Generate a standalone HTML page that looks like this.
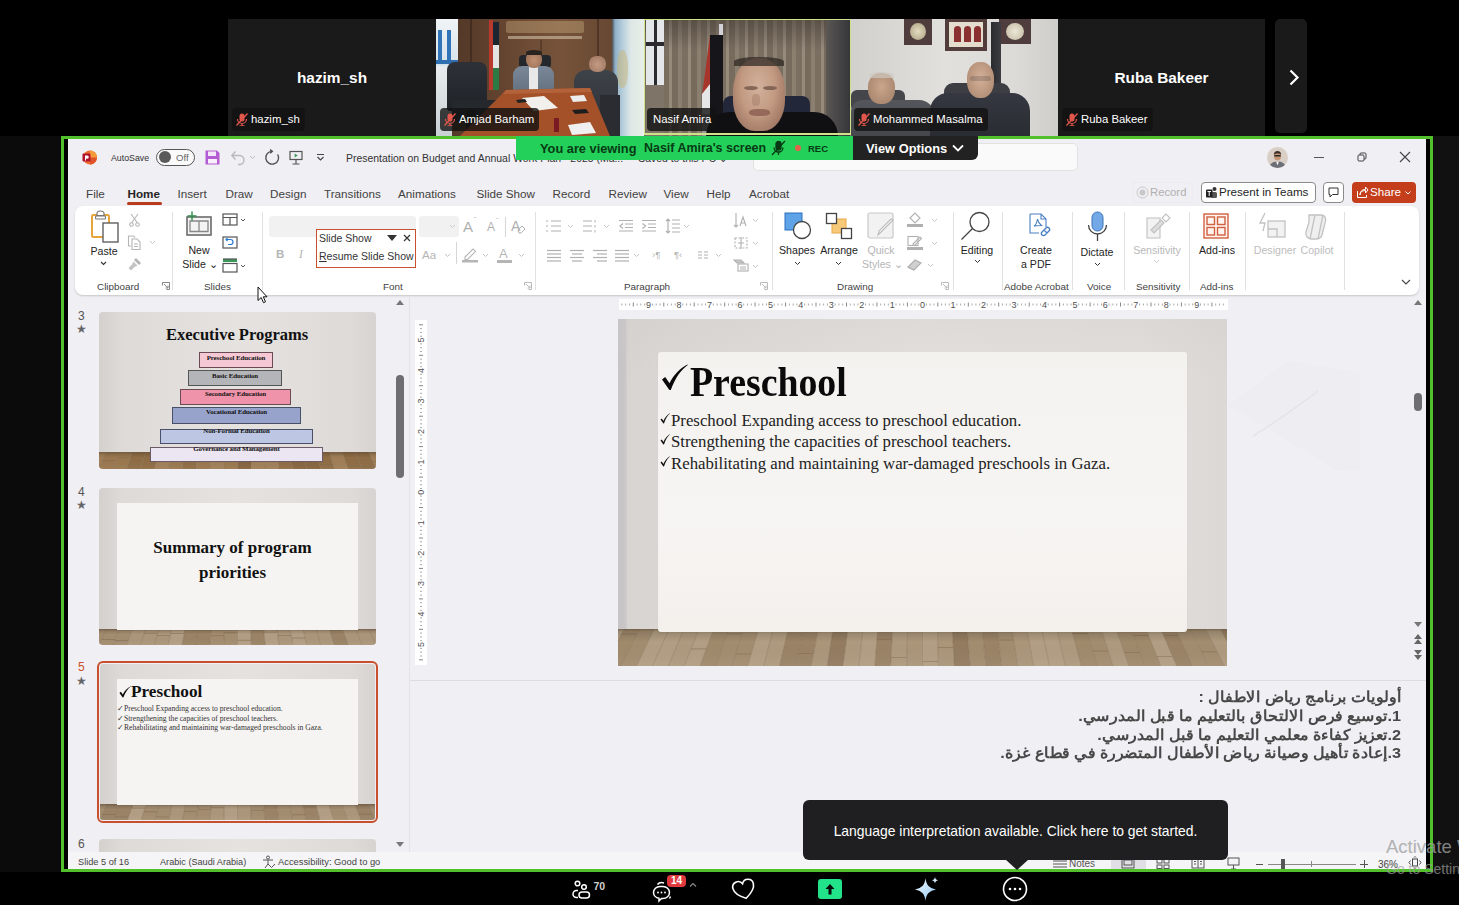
<!DOCTYPE html>
<html><head><meta charset="utf-8">
<style>
*{margin:0;padding:0;box-sizing:border-box}
html,body{width:1459px;height:905px;overflow:hidden;background:#000;font-family:"Liberation Sans",sans-serif}
.a{position:absolute}
.tile{position:absolute;top:19px;height:117px;background:#1a1a1a;overflow:hidden}
.nm{position:absolute;left:0;right:0;top:49.5px;text-align:center;color:#fff;font-weight:bold;font-size:15.4px}
.lab{position:absolute;top:89px;height:23px;background:rgba(17,17,17,.8);border-radius:4px;color:#fff;font-size:11.4px;line-height:23px;padding-left:19px;padding-right:5px;white-space:nowrap}
.mic{position:absolute;left:4px;top:5px;width:12px;height:13px}
#win{position:absolute;left:68px;top:139px;width:1358px;height:730px;background:#f0eff3;overflow:hidden}
.t{position:absolute;white-space:nowrap;color:#242424}

#ppt{position:absolute;left:0;top:0;width:1459px;height:905px;clip-path:inset(139px 33px 36px 68px)}
.tab{position:absolute;top:186.7px;font-size:11.7px;color:#424242;white-space:nowrap;line-height:14px}
.rl{position:absolute;font-size:10.6px;color:#242424;white-space:nowrap;line-height:12px;text-align:center}
.gl{position:absolute;top:280.6px;font-size:9.9px;color:#424242;white-space:nowrap;line-height:12px}
.sep{position:absolute;top:212px;width:1px;height:78px;background:#e1e1e1}
.ic{position:absolute;overflow:visible}
.dl{position:absolute;top:282px;width:8px;height:8px}

.num{position:absolute;left:78px;font-size:12px;color:#555;line-height:12px}
.star{position:absolute;left:76px;font-size:12px;color:#666;line-height:12px}
.th{position:absolute;left:99px;width:277px;height:157px;border-radius:4px;overflow:hidden;background:linear-gradient(90deg,#d3d0ce 0%,#dedad7 8%,#e5e2df 50%,#dedad7 92%,#d6d3d1 100%)}
.fl{position:absolute;left:0;right:0;bottom:0;background:repeating-linear-gradient(115deg,#a88f6f 0 5px,#9b8262 5px 7px,#b09a7c 7px 11px,#947b5c 11px 13px)}
.pn{position:absolute;background:#f6f4f2}
.ser{font-family:"Liberation Serif",serif;position:absolute;white-space:nowrap;color:#111}
</style></head><body>
<svg width="0" height="0" style="position:absolute"><defs><linearGradient id="fshade" x1="0" y1="0" x2="0" y2="1"><stop offset="0" stop-color="#000" stop-opacity=".18"/><stop offset=".35" stop-color="#000" stop-opacity="0"/><stop offset="1" stop-color="#fff" stop-opacity=".05"/></linearGradient></defs></svg>
<!-- video strip -->
<div class="tile" style="left:228px;width:208px"><div class="nm">hazim_sh</div><div class="lab" style="left:4px"><svg class="mic" viewBox="0 0 12 13"><rect x="3.5" y="0.5" width="5" height="8" rx="2.5" fill="#e2574c"/><path d="M1.5 6a4.5 4.5 0 0 0 9 0M6 10.5V13M3.5 12.8h5" fill="none" stroke="#e2574c" stroke-width="1.2"/><path d="M0.5 12.5L11.5 0.5" stroke="#e2574c" stroke-width="1.3"/></svg>hazim_sh</div></div>
<div class="tile" id="v1" style="left:436px;width:208px"><div class="a" style="left:0;top:0;width:208px;height:117px;filter:blur(.45px)"><div class="a" style="left:0px;top:0px;width:208px;height:117px;background:linear-gradient(90deg,#4f3626 0,#5a3d2b 20%,#6e4c35 45%,#76533a 60%,#6a4a34 80%,#5a4232 100%)"></div><div class="a" style="left:34px;top:0px;width:2px;height:81px;background:#422d20"></div><div class="a" style="left:104px;top:21px;width:2px;height:50px;background:#5a3d2b"></div><div class="a" style="left:161px;top:0px;width:2px;height:76px;background:#4e3526"></div><div class="a" style="left:0px;top:0px;width:22px;height:47px;background:linear-gradient(180deg,#f0f4f6,#d6e2ea)"></div><div class="a" style="left:2px;top:11px;width:4px;height:32px;background:#3274b8"></div><div class="a" style="left:11px;top:11px;width:4px;height:32px;background:#3274b8"></div><div class="a" style="left:0px;top:41px;width:22px;height:4px;background:#2f6fb0"></div><div class="a" style="left:0px;top:47px;width:16px;height:70px;background:linear-gradient(180deg,#e8ecee,#c9d0d4)"></div><div class="a" style="left:70px;top:2px;width:78px;height:12px;background:rgba(215,190,140,.35);border-radius:2px"></div><div class="a" style="left:72px;top:17px;width:74px;height:3px;background:rgba(230,215,190,.5)"></div><div class="a" style="left:53px;top:1px;width:4px;height:70px;background:#b83a2f"></div><div class="a" style="left:57px;top:3px;width:6px;height:23px;background:#1d2530"></div><div class="a" style="left:57px;top:26px;width:6px;height:23px;background:#e3e3e3"></div><div class="a" style="left:57px;top:49px;width:6px;height:22px;background:#2d7a45"></div><div class="a" style="left:176px;top:0px;width:32px;height:117px;background:linear-gradient(90deg,#4d4f55 0,#8fb0c8 10%,#b9d0de 35%,#dfe8e6 60%,#e9efe9)"></div><div class="a" style="left:181px;top:31px;width:11px;height:38px;background:#c9b87e;border-radius:45%;opacity:.55"></div><div class="a" style="left:11px;top:43px;width:40px;height:49px;background:linear-gradient(180deg,#2e3137,#1f2227);border-radius:8px 8px 3px 3px"></div><div class="a" style="left:16px;top:81px;width:48px;height:22px;background:#25282d;border-radius:4px"></div><div class="a" style="left:30px;top:91px;width:10px;height:26px;background:#1a1c20"></div><div class="a" style="left:83px;top:36px;width:32px;height:13px;background:#24272c;border-radius:4px"></div><div class="a" style="left:77px;top:47px;width:41px;height:26px;background:linear-gradient(180deg,#7a8899,#64717f);border-radius:9px 9px 3px 3px"></div><div class="a" style="left:93px;top:48px;width:9px;height:23px;background:#e8e8e8"></div><div class="a" style="left:90px;top:32px;width:16px;height:17px;background:radial-gradient(ellipse at 50% 55%,#c09072,#946a52);border-radius:45%"></div><div class="a" style="left:90px;top:31px;width:16px;height:5px;background:#2a2420;border-radius:50% 50% 0 0"></div><div class="a" style="left:138px;top:51px;width:44px;height:58px;background:linear-gradient(180deg,#3e4249,#2e3137);border-radius:12px 12px 4px 4px"></div><div class="a" style="left:153px;top:37px;width:17px;height:16px;background:radial-gradient(ellipse at 50% 55%,#c49a82,#9a7460);border-radius:45%"></div><div class="a" style="left:164px;top:76px;width:20px;height:41px;background:#2a2c31"></div><svg class="ic" style="left:22px;top:69px" width="160" height="48" viewBox="0 0 160 48"><path d="M48 2L132 0 152 48H2z" fill="#a4512a"/><path d="M48 2L132 0 134 4 45 6z" fill="#b3623a"/><path d="M64 10l22-2 14 12-24 3z" fill="#f2f0ec"/><path d="M112 8l14-1 3 6-14 1z" fill="#ececec"/><path d="M110 37l22-3 6 11-24 2z" fill="#f0f0f0"/><path d="M114 22l14-1 3 4-14 1z" fill="#1e1e1e"/><path d="M58 12l9-1 2 3-9 1z" fill="#222"/><path d="M96 30h5v14h-5z" fill="#7a1a22"/></svg></div><div class="lab" style="left:4px"><svg class="mic" viewBox="0 0 12 13"><rect x="3.5" y="0.5" width="5" height="8" rx="2.5" fill="#e2574c"/><path d="M1.5 6a4.5 4.5 0 0 0 9 0M6 10.5V13M3.5 12.8h5" fill="none" stroke="#e2574c" stroke-width="1.2"/><path d="M0.5 12.5L11.5 0.5" stroke="#e2574c" stroke-width="1.3"/></svg>Amjad Barham</div></div>
<div class="tile" id="v2" style="left:644px;width:207px"><div class="a" style="left:0;top:0;width:207px;height:117px;filter:blur(.45px)"><div class="a" style="left:0px;top:0px;width:207px;height:117px;background:repeating-linear-gradient(90deg,#7b6f62 0 6px,#968a7b 6px 9px,#776b5e 9px 15px,#8b7f70 15px 19px)"></div><div class="a" style="left:0px;top:0px;width:207px;height:31px;background:linear-gradient(180deg,rgba(40,34,28,.4),rgba(0,0,0,0))"></div><div class="a" style="left:2px;top:1px;width:18px;height:65px;background:#e4e7ea"></div><div class="a" style="left:2px;top:23px;width:18px;height:4px;background:#2a2a30"></div><div class="a" style="left:10px;top:1px;width:3px;height:65px;background:#2a2a30"></div><div class="a" style="left:2px;top:66px;width:18px;height:51px;background:#7f7468"></div><div class="a" style="left:182px;top:0px;width:24px;height:117px;background:linear-gradient(90deg,#5a5754,#36363a)"></div><svg class="ic" style="left:56px;top:5px" width="26" height="112" viewBox="0 0 26 112"><rect x="19" y="0" width="4" height="11" fill="#d2d2d6"/><path d="M10 11h13v101H10z" fill="#15151a"/><path d="M10 11L2 72v40h8z" fill="#a8352c"/><path d="M2 70l8-10v30H2z" fill="#e6e6e6"/><path d="M2 90h8v22H2z" fill="#9a9a9a"/></svg><div class="a" style="left:79px;top:77px;width:87px;height:22px;background:#22273a;border-radius:8px 8px 0 0"></div><div class="a" style="left:62px;top:93px;width:132px;height:24px;background:#101013;border-radius:28px 28px 0 0"></div><div class="a" style="left:89px;top:39px;width:52px;height:73px;background:radial-gradient(ellipse at 48% 40%,#d2b19c 0,#c29a82 45%,#a07864 78%,#6e5246 100%);border-radius:46% 46% 42% 42%"></div><div class="a" style="left:90px;top:38px;width:50px;height:9px;background:#2a2420;border-radius:50% 50% 0 0;opacity:.7"></div><div class="a" style="left:100px;top:67px;width:14px;height:4px;background:#6d5244;border-radius:50%;opacity:.75"></div><div class="a" style="left:119px;top:67px;width:14px;height:4px;background:#6d5244;border-radius:50%;opacity:.75"></div><div class="a" style="left:108px;top:75px;width:8px;height:12px;background:rgba(150,110,90,.35);border-radius:40%"></div><div class="a" style="left:105px;top:90px;width:21px;height:7px;background:#8a5c50;border-radius:40%;opacity:.8"></div><div class="a" style="left:-1px;top:-1px;width:209px;height:117px;border:2px solid #cfe389"></div></div><div class="lab" style="left:3px;padding-left:6px">Nasif Amira</div></div>
<div class="tile" id="v3" style="left:851px;width:207px"><div class="a" style="left:0;top:0;width:207px;height:117px;filter:blur(.45px)"><div class="a" style="left:0px;top:0px;width:207px;height:117px;background:linear-gradient(90deg,#d2d0cc,#e2e0dc 45%,#dcdad6 80%,#d0cecb)"></div><div class="a" style="left:53px;top:0px;width:28px;height:26px;background:#4f3d3d"></div><div class="a" style="left:59px;top:4px;width:16px;height:17px;background:radial-gradient(circle,#e4dcc0,#a89e80);border-radius:50%"></div><div class="a" style="left:94px;top:0px;width:42px;height:32px;background:#533c3c"></div><div class="a" style="left:98px;top:3px;width:34px;height:25px;background:#e4dccc"></div><div class="a" style="left:103px;top:7px;width:7px;height:16px;background:#8a3030;border-radius:4px 4px 0 0"></div><div class="a" style="left:113px;top:7px;width:7px;height:16px;background:#8a3030;border-radius:4px 4px 0 0"></div><div class="a" style="left:123px;top:7px;width:7px;height:16px;background:#8a3030;border-radius:4px 4px 0 0"></div><div class="a" style="left:148px;top:0px;width:32px;height:25px;background:#4f3d3d"></div><div class="a" style="left:155px;top:4px;width:18px;height:17px;background:radial-gradient(circle,#ece6d6,#bfb8a0);border-radius:50%"></div><div class="a" style="left:140px;top:3px;width:10px;height:68px;background:linear-gradient(90deg,#2a2b2f,#3c3d42)"></div><div class="a" style="left:0px;top:71px;width:54px;height:22px;background:#45464c;border-radius:6px"></div><div class="a" style="left:0px;top:81px;width:84px;height:36px;background:linear-gradient(180deg,#55565c,#46474c);border-radius:12px 16px 0 0"></div><div class="a" style="left:17px;top:54px;width:27px;height:31px;background:radial-gradient(ellipse at 50% 45%,#c9a68c,#a07e66);border-radius:45%"></div><div class="a" style="left:18px;top:53px;width:25px;height:6px;background:#cfc9c2;border-radius:50% 50% 0 0;opacity:.7"></div><div class="a" style="left:93px;top:64px;width:66px;height:29px;background:#3c3e44;border-radius:9px"></div><div class="a" style="left:79px;top:74px;width:100px;height:43px;background:linear-gradient(180deg,#363841,#2a2c33);border-radius:18px 18px 0 0"></div><div class="a" style="left:116px;top:43px;width:27px;height:36px;background:radial-gradient(ellipse at 50% 45%,#d4b098,#a8846c);border-radius:45%"></div><div class="a" style="left:119px;top:57px;width:21px;height:5px;background:rgba(50,50,50,.22);border-radius:3px"></div></div><div class="lab" style="left:3px"><svg class="mic" viewBox="0 0 12 13"><rect x="3.5" y="0.5" width="5" height="8" rx="2.5" fill="#e2574c"/><path d="M1.5 6a4.5 4.5 0 0 0 9 0M6 10.5V13M3.5 12.8h5" fill="none" stroke="#e2574c" stroke-width="1.2"/><path d="M0.5 12.5L11.5 0.5" stroke="#e2574c" stroke-width="1.3"/></svg>Mohammed Masalma</div></div>
<div class="tile" style="left:1058px;width:207px"><div class="nm">Ruba Bakeer</div><div class="lab" style="left:4px"><svg class="mic" viewBox="0 0 12 13"><rect x="3.5" y="0.5" width="5" height="8" rx="2.5" fill="#e2574c"/><path d="M1.5 6a4.5 4.5 0 0 0 9 0M6 10.5V13M3.5 12.8h5" fill="none" stroke="#e2574c" stroke-width="1.2"/><path d="M0.5 12.5L11.5 0.5" stroke="#e2574c" stroke-width="1.3"/></svg>Ruba Bakeer</div></div>
<div class="a" style="left:1275px;top:19px;width:32px;height:114px;background:#1a1a1a;border-radius:5px"></div><svg class="ic" style="left:1289px;top:69px" width="11" height="17" viewBox="0 0 11 17" fill="none" stroke="#fff" stroke-width="2.2"><path d="M1.5 1.5l7 7-7 7"/></svg>

<!-- share border -->
<div class="a" style="left:0;top:136px;width:61px;height:736px;background:#0b0b0b"></div><div class="a" style="left:1433px;top:136px;width:26px;height:736px;background:#111"></div>
<div class="a" style="left:61px;top:136px;width:1372px;height:736px;border:3px solid #52c02a;background:#000"></div>
<div id="win"></div>

<div id="ppt">
<!-- title bar -->
<svg class="ic" style="left:82px;top:150px" width="15" height="15" viewBox="0 0 15 15"><circle cx="8" cy="7.5" r="7" fill="#ed6c2f"/><path d="M8 .5a7 7 0 0 1 0 14z" fill="#f59b3c"/><path d="M8 7.5h7a7 7 0 0 1-7 7z" fill="#e0522a"/><rect x="0.5" y="3.5" width="8" height="8" rx="1" fill="#b3122b"/><path d="M3 5.5h2.2a1.6 1.6 0 0 1 0 3.2H4v1.8H3z" fill="#fff"/></svg>
<div class="t" style="left:111px;top:153px;font-size:8.8px;color:#333">AutoSave</div>
<div class="a" style="left:156px;top:149px;width:39px;height:17px;border:1px solid #555;border-radius:9px;background:#fafafa"></div>
<div class="a" style="left:159px;top:151px;width:12px;height:12px;border-radius:50%;background:#5a5a5a"></div>
<div class="t" style="left:176px;top:152px;font-size:9.6px;color:#666">Off</div>
<svg class="ic" style="left:205px;top:150px" width="15" height="15" viewBox="0 0 15 15"><path d="M0.5 0.5h11.5l2.5 2.5v11.5h-14z" fill="#b45cd4"/><rect x="3" y="1.5" width="8" height="4.5" fill="#fff" opacity=".85"/><rect x="3" y="9" width="9" height="4.5" fill="#fff" opacity=".9"/></svg>
<svg class="ic" style="left:230px;top:149px" width="16" height="16" viewBox="0 0 16 16" fill="none" stroke="#b9b9b9" stroke-width="1.4"><path d="M2 6.5h7.5a4.5 4.5 0 0 1 0 9H8"/><path d="M5.5 2.5L1.8 6.5l3.7 4"/></svg>
<svg class="ic" style="left:249px;top:155px" width="7" height="5" viewBox="0 0 7 5" fill="none" stroke="#bbb" stroke-width="1"><path d="M1 1l2.5 2.5L6 1"/></svg>
<svg class="ic" style="left:264px;top:149px" width="17" height="17" viewBox="0 0 17 17" fill="none" stroke="#505050" stroke-width="1.3"><path d="M8 2.3A6.4 6.4 0 1 0 13.6 5.3"/><path d="M6 .6l2.4 1.7L6.2 4.3"/></svg>
<svg class="ic" style="left:289px;top:150px" width="14" height="15" viewBox="0 0 14 15" fill="none" stroke="#555" stroke-width="1.2"><rect x="1" y="1.5" width="12" height="8"/><path d="M7 9.5v4.5M3.5 14h7"/><path d="M5.6 3.6l3.2 1.9-3.2 1.9z" fill="#3a9a5a" stroke="none"/></svg>
<svg class="ic" style="left:316px;top:153px" width="9" height="9" viewBox="0 0 9 9" fill="none" stroke="#444" stroke-width="1.1"><path d="M1 1.5h7M1.5 4l3 3 3-3"/></svg>
<div class="t" style="left:346px;top:152px;font-size:10.45px;color:#333">Presentation on Budget and Annual Work Plan - 2025 (Ma... &nbsp;- &nbsp;Saved to this PC &#8964;</div>
<div class="a" style="left:753px;top:143px;width:325px;height:28px;background:#fafafa;border:1px solid #e2e2e2;border-radius:5px"></div>
<svg class="ic" style="left:1267px;top:147px" width="21" height="21" viewBox="0 0 21 21"><defs><clipPath id="avc"><circle cx="10.5" cy="10.5" r="10.5"/></clipPath></defs><g clip-path="url(#avc)"><rect width="21" height="21" fill="#d9cfc6"/><path d="M2 21c1-5 4-6.5 8.5-6.5S18 16 19 21z" fill="#6d6f78"/><path d="M9 14.5h3l-1.5 4z" fill="#eee"/><ellipse cx="10.5" cy="9" rx="3.6" ry="4.4" fill="#c49474"/><path d="M6.8 8.2c0-3 1.6-4.3 3.7-4.3s3.7 1.3 3.7 4.3c-.8-1.2-2-1.6-3.7-1.6s-2.9.4-3.7 1.6z" fill="#3a302a"/><rect x="7.3" y="8" width="6.4" height="1.6" rx=".6" fill="#2a2a2a"/></g></svg>
<div class="a" style="left:1314px;top:157px;width:10px;height:1px;background:#555"></div>
<svg class="ic" style="left:1357px;top:152px" width="10" height="10" viewBox="0 0 10 10" fill="none" stroke="#444" stroke-width="1"><rect x="1" y="3" width="6" height="6" rx="1"/><path d="M3 3V2a1 1 0 0 1 1-1h4a1 1 0 0 1 1 1v4a1 1 0 0 1-1 1H7"/></svg>
<svg class="ic" style="left:1399px;top:151px" width="12" height="12" viewBox="0 0 12 12" fill="none" stroke="#444" stroke-width="1.1"><path d="M1 1l10 10M11 1L1 11"/></svg>
<!-- tabs -->
<div class="tab" style="left:86px">File</div>
<div class="tab" style="left:127.5px;font-weight:bold;color:#242424">Home</div>
<div class="a" style="left:127px;top:202px;width:35px;height:2.5px;border-radius:2px;background:#b83b1d"></div>
<div class="tab" style="left:177.5px">Insert</div>
<div class="tab" style="left:225.5px">Draw</div>
<div class="tab" style="left:270px">Design</div>
<div class="tab" style="left:324px">Transitions</div>
<div class="tab" style="left:398px">Animations</div>
<div class="tab" style="left:476.5px">Slide Show</div>
<div class="tab" style="left:552.5px">Record</div>
<div class="tab" style="left:608.5px">Review</div>
<div class="tab" style="left:663.5px">View</div>
<div class="tab" style="left:706.5px">Help</div>
<div class="tab" style="left:749px">Acrobat</div>
<!-- right buttons -->
<div class="a" style="left:1132px;top:182px;width:61px;height:21px;border:1px solid #ececec;border-radius:4px"></div>
<svg class="ic" style="left:1136px;top:186px" width="13" height="13" viewBox="0 0 13 13"><circle cx="6.5" cy="6.5" r="5.5" fill="none" stroke="#c8c8c8" stroke-width="1"/><circle cx="6.5" cy="6.5" r="3" fill="#c8c8c8"/></svg>
<div class="t" style="left:1150px;top:186px;font-size:11.3px;color:#b0b0b0">Record</div>
<div class="a" style="left:1201px;top:182px;width:115px;height:21px;border:1px solid #8a8a8a;border-radius:4px;background:#fff"></div>
<svg class="ic" style="left:1205px;top:186px" width="13" height="13" viewBox="0 0 13 13"><circle cx="9.5" cy="3" r="2" fill="#333"/><rect x="6" y="6" width="6" height="6" rx="1.5" fill="#555"/><rect x="1" y="3.5" width="6.5" height="8" rx="1" fill="#222"/><path d="M2.5 5.5h3.5M4.2 5.5v4.5" stroke="#fff" stroke-width="1"/></svg>
<div class="t" style="left:1219px;top:185px;font-size:11.6px;color:#242424">Present in Teams</div>
<div class="a" style="left:1323px;top:182px;width:21px;height:21px;border:1px solid #8a8a8a;border-radius:4px;background:#fff"></div>
<svg class="ic" style="left:1328px;top:187px" width="11" height="11" viewBox="0 0 11 11" fill="none" stroke="#333" stroke-width="1"><path d="M1 1h9v6.5H4.5L2 10V7.5H1z"/></svg>
<div class="a" style="left:1352px;top:182px;width:64px;height:21px;border-radius:4px;background:#c43e1c"></div>
<svg class="ic" style="left:1356px;top:186px" width="13" height="13" viewBox="0 0 13 13" fill="none" stroke="#fff" stroke-width="1"><path d="M1.5 5v6.5h9V9"/><path d="M4 9c0-3 2-4.5 5.5-4.5V7L12 4 9.5 1v2.5C5.5 3.5 4 6 4 9z"/></svg>
<div class="t" style="left:1370px;top:185px;font-size:11.6px;color:#fff">Share</div>
<svg class="ic" style="left:1405px;top:191px" width="6" height="4" viewBox="0 0 6 4" fill="none" stroke="#fff" stroke-width="1"><path d="M.5.5L3 3 5.5.5"/></svg>
<!-- ribbon -->
<div class="a" style="left:75px;top:206px;width:1344px;height:89px;background:#fff;border-radius:8px;box-shadow:0 1px 2px rgba(0,0,0,.18)"></div>

<!-- Clipboard -->
<svg class="ic" style="left:90px;top:211px" width="30" height="33" viewBox="0 0 30 33"><rect x="2" y="4" width="17" height="22" rx="1.5" fill="#fff" stroke="#e8a33a" stroke-width="2"/><path d="M7 4.5h7v-2a3.5 2.5 0 0 0-7 0z" fill="#fff" stroke="#777" stroke-width="1.2"/><rect x="5.5" y="5" width="10" height="3" rx="1" fill="#fff" stroke="#777" stroke-width="1.1"/><rect x="13" y="12" width="15" height="19" fill="#fff" stroke="#616161" stroke-width="1.4"/></svg>
<div class="rl" style="left:90px;top:245px;width:28px">Paste</div>
<svg class="ic" style="left:100px;top:261px" width="7" height="5" viewBox="0 0 7 5" fill="none" stroke="#333" stroke-width="1.1"><path d="M1 1l2.5 2.5L6 1"/></svg>
<svg class="ic" style="left:129px;top:213px" width="11" height="14" viewBox="0 0 11 14" fill="none" stroke="#b5b5b5" stroke-width="1.1"><path d="M2 1l6.5 9M9 1L2.5 10"/><circle cx="2.5" cy="11.5" r="1.8"/><circle cx="8.5" cy="11.5" r="1.8"/></svg>
<svg class="ic" style="left:127px;top:235px" width="16" height="15" viewBox="0 0 16 15" fill="none" stroke="#b5b5b5" stroke-width="1.1"><path d="M4 11H1.5V1h5l1.5 1.5"/><path d="M5 4h5l3 3v7.5H5z"/><path d="M7 9h4M7 11.5h4"/></svg>
<svg class="ic" style="left:149px;top:240px" width="7" height="5" viewBox="0 0 7 5" fill="none" stroke="#c5c5c5" stroke-width="1"><path d="M1 1l2.5 2.5L6 1"/></svg>
<svg class="ic" style="left:127px;top:257px" width="15" height="15" viewBox="0 0 15 15" fill="#b5b5b5"><path d="M9 1l5 5-2 2-5-5z"/><path d="M6.5 4.5l4 4-3 1.5L4 13.5 1.5 11 5 7.5z" fill="#c3c3c3"/></svg>
<div class="gl" style="left:97px">Clipboard</div>
<svg class="dl" style="left:162px" viewBox="0 0 8 8" fill="none" stroke="#888" stroke-width="1"><path d="M.5 3.5V.5h7v7h-3M2 2l4 4M6 3.5V6H3.5"/></svg>
<div class="sep" style="left:172px"></div>
<!-- Slides -->
<svg class="ic" style="left:185px;top:211px" width="28" height="25" viewBox="0 0 28 25" fill="none"><rect x="2" y="6" width="24" height="18" fill="#f4f4f4" stroke="#6b6b6b" stroke-width="1.6"/><path d="M5 10h18v10.5H5z" stroke="#888" stroke-width="1.3"/><path d="M14 10v10.5" stroke="#888" stroke-width="1.3"/><path d="M7 0.5v9M2.5 5h9" stroke="#2f8a4a" stroke-width="1.4"/></svg>
<div class="rl" style="left:186px;top:244px;width:26px">New</div>
<div class="rl" style="left:181px;top:258px;width:38px">Slide &#8964;</div>
<svg class="ic" style="left:222px;top:213px" width="24" height="14" viewBox="0 0 24 14" fill="none" stroke="#555" stroke-width="1.2"><rect x="1" y="1" width="14" height="11"/><path d="M1 4.5h14M8 4.5V12"/><path d="M19 6l2 2 2-2" stroke-width="1"/></svg>
<svg class="ic" style="left:222px;top:235px" width="16" height="14" viewBox="0 0 16 14" fill="none" stroke="#555" stroke-width="1.2"><rect x="1" y="2" width="14" height="11"/><path d="M4 4.5h4.5a2.5 2.5 0 0 1 0 5H6" stroke="#2b7cd3"/><path d="M5.5 3L4 4.5 5.5 6" stroke="#2b7cd3"/></svg>
<svg class="ic" style="left:222px;top:258px" width="24" height="15" viewBox="0 0 24 15" fill="none" stroke="#555" stroke-width="1.2"><rect x="1" y="1" width="14" height="3" fill="#3a9a5a" stroke="none"/><rect x="1" y="5.5" width="14" height="8.5"/><path d="M1 1h14" stroke="#555"/><path d="M19 7l2 2 2-2" stroke-width="1"/></svg>
<div class="gl" style="left:204px">Slides</div>
<div class="sep" style="left:262px"></div>
<!-- Font -->
<div class="a" style="left:269px;top:216px;width:147px;height:21px;background:#f1f1f1;border-radius:3px"></div>
<div class="a" style="left:419px;top:216px;width:40px;height:21px;background:#f1f1f1;border-radius:3px"></div>
<svg class="ic" style="left:449px;top:224px" width="7" height="5" viewBox="0 0 7 5" fill="none" stroke="#ccc" stroke-width="1"><path d="M1 1l2.5 2.5L6 1"/></svg>
<div class="t" style="left:463px;top:218px;font-size:15px;color:#b0b0b0">A</div>
<div class="t" style="left:474px;top:216px;font-size:7px;color:#b0b0b0">&#710;</div>
<div class="t" style="left:487px;top:220px;font-size:12px;color:#b0b0b0">A</div>
<div class="t" style="left:496px;top:217px;font-size:7px;color:#b0b0b0">&#711;</div>
<div class="a" style="left:505px;top:217px;width:1px;height:20px;background:#d6d6d6"></div>
<div class="t" style="left:511px;top:218px;font-size:14px;color:#b0b0b0">A</div>
<svg class="ic" style="left:517px;top:225px" width="9" height="9" viewBox="0 0 9 9" fill="none" stroke="#b0b0b0" stroke-width="1"><path d="M1 5l4-4 3 3-4 4H2z"/></svg>
<div class="t" style="left:276px;top:248px;font-size:11.5px;font-weight:bold;color:#b5b5b5">B</div>
<div class="t" style="left:299px;top:248px;font-size:11.5px;font-style:italic;color:#b5b5b5;font-family:'Liberation Serif',serif">I</div>
<div class="t" style="left:422px;top:249px;font-size:11.5px;color:#b5b5b5">Aa</div>
<svg class="ic" style="left:444px;top:253px" width="7" height="5" viewBox="0 0 7 5" fill="none" stroke="#c5c5c5" stroke-width="1"><path d="M1 1l2.5 2.5L6 1"/></svg>
<div class="a" style="left:456px;top:242px;width:1px;height:22px;background:#d6d6d6"></div>
<svg class="ic" style="left:461px;top:246px" width="18" height="17" viewBox="0 0 18 17" fill="none" stroke="#b5b5b5" stroke-width="1.1"><path d="M4 11l8-8 2.5 2.5-8 8H4z"/><rect x="1" y="14" width="16" height="2.5" fill="#b5b5b5" stroke="none"/></svg>
<svg class="ic" style="left:482px;top:253px" width="7" height="5" viewBox="0 0 7 5" fill="none" stroke="#c5c5c5" stroke-width="1"><path d="M1 1l2.5 2.5L6 1"/></svg>
<div class="t" style="left:499px;top:246px;font-size:13px;color:#b5b5b5">A</div>
<div class="a" style="left:497px;top:260px;width:15px;height:2.5px;background:#b5b5b5"></div>
<svg class="ic" style="left:518px;top:253px" width="7" height="5" viewBox="0 0 7 5" fill="none" stroke="#c5c5c5" stroke-width="1"><path d="M1 1l2.5 2.5L6 1"/></svg>
<div class="a" style="left:316px;top:229px;width:100px;height:39px;border:1.5px solid #c9502e;background:#fff"></div>
<div class="t" style="left:319px;top:232px;font-size:10.5px;color:#333">Slide Show</div>
<svg class="ic" style="left:387px;top:235px" width="10" height="6" viewBox="0 0 10 6"><path d="M0 0h10L5 6z" fill="#333"/></svg>
<svg class="ic" style="left:403px;top:234px" width="8" height="8" viewBox="0 0 8 8" fill="none" stroke="#333" stroke-width="1.2"><path d="M1 1l6 6M7 1L1 7"/></svg>
<div class="t" style="left:319px;top:250px;font-size:10.5px;color:#333"><u>R</u>esume Slide Show</div>
<div class="gl" style="left:383px">Font</div>
<svg class="dl" style="left:524px" viewBox="0 0 8 8" fill="none" stroke="#bbb" stroke-width="1"><path d="M.5 3.5V.5h7v7h-3M2 2l4 4M6 3.5V6H3.5"/></svg>
<div class="sep" style="left:535px"></div>

<!-- Paragraph -->
<svg class="ic" style="left:545px;top:219px" width="17" height="14" viewBox="0 0 17 14" fill="none" stroke="#b0b0b0" stroke-width="1.2"><path d="M1 2h2M1 7h2M1 12h2M6 2h10M6 7h10M6 12h10"/></svg><svg class="ic" style="left:567px;top:224px" width="7" height="5" viewBox="0 0 7 5" fill="none" stroke="#c5c5c5" stroke-width="1"><path d="M1 1l2.5 2.5L6 1"/></svg>
<svg class="ic" style="left:582px;top:219px" width="17" height="14" viewBox="0 0 17 14" fill="none" stroke="#b0b0b0" stroke-width="1.2"><path d="M1 2h9M1 7h9M1 12h9"/><path d="M13 1v2.5M13 6v2.5M13 11v2.5" stroke-width="1"/></svg><svg class="ic" style="left:603px;top:224px" width="7" height="5" viewBox="0 0 7 5" fill="none" stroke="#c5c5c5" stroke-width="1"><path d="M1 1l2.5 2.5L6 1"/></svg>
<svg class="ic" style="left:618px;top:219px" width="16" height="14" viewBox="0 0 16 14" fill="none" stroke="#b0b0b0" stroke-width="1.2"><path d="M1 1.5h14M7 5h8M7 8.5h8M1 12h14M5 4.5L2 7l3 2.5"/></svg>
<svg class="ic" style="left:641px;top:219px" width="16" height="14" viewBox="0 0 16 14" fill="none" stroke="#b0b0b0" stroke-width="1.2"><path d="M1 1.5h14M7 5h8M7 8.5h8M1 12h14M1.5 4.5l3 2.5-3 2.5"/></svg>
<svg class="ic" style="left:665px;top:218px" width="16" height="16" viewBox="0 0 16 16" fill="none" stroke="#b0b0b0" stroke-width="1.2"><path d="M3 1v14M1 3l2-2 2 2M1 13l2 2 2-2M7 2h8M7 6h8M7 10h8M7 14h8"/></svg><svg class="ic" style="left:683px;top:224px" width="7" height="5" viewBox="0 0 7 5" fill="none" stroke="#c5c5c5" stroke-width="1"><path d="M1 1l2.5 2.5L6 1"/></svg>
<svg class="ic" style="left:733px;top:212px" width="15" height="17" viewBox="0 0 15 17" fill="none" stroke="#b0b0b0" stroke-width="1.1"><path d="M3 1v14M1 13l2 2 2-2M7 14l3-9 3 9M8 11h4" /></svg><svg class="ic" style="left:752px;top:218px" width="7" height="5" viewBox="0 0 7 5" fill="none" stroke="#c5c5c5" stroke-width="1"><path d="M1 1l2.5 2.5L6 1"/></svg>
<svg class="ic" style="left:733px;top:236px" width="16" height="14" viewBox="0 0 16 14" fill="none" stroke="#b0b0b0" stroke-width="1.1"><rect x="2" y="2" width="12" height="10" stroke-dasharray="2 1.5"/><path d="M8 1v12M5 7h6"/></svg><svg class="ic" style="left:752px;top:241px" width="7" height="5" viewBox="0 0 7 5" fill="none" stroke="#c5c5c5" stroke-width="1"><path d="M1 1l2.5 2.5L6 1"/></svg>
<svg class="ic" style="left:733px;top:258px" width="16" height="14" viewBox="0 0 16 14" fill="none" stroke="#b0b0b0" stroke-width="1.1"><path d="M1 2h7l3 3H4z" fill="#c8c8c8"/><rect x="5" y="6" width="10" height="7"/><path d="M7 9h6M7 11h6"/></svg><svg class="ic" style="left:752px;top:264px" width="7" height="5" viewBox="0 0 7 5" fill="none" stroke="#c5c5c5" stroke-width="1"><path d="M1 1l2.5 2.5L6 1"/></svg>
<svg class="ic" style="left:546px;top:249px" width="16" height="14" viewBox="0 0 16 14" fill="none" stroke="#b0b0b0" stroke-width="1.2"><path d="M1 1.5H15"/><path d="M1 5.0H15"/><path d="M1 8.5H15"/><path d="M1 12.0H15"/></svg>
<svg class="ic" style="left:569px;top:249px" width="16" height="14" viewBox="0 0 16 14" fill="none" stroke="#b0b0b0" stroke-width="1.2"><path d="M1 1.5H15"/><path d="M3 5.0H13"/><path d="M1 8.5H15"/><path d="M3 12.0H13"/></svg>
<svg class="ic" style="left:592px;top:249px" width="16" height="14" viewBox="0 0 16 14" fill="none" stroke="#b0b0b0" stroke-width="1.2"><path d="M1 1.5H15"/><path d="M5 5.0H15"/><path d="M1 8.5H15"/><path d="M5 12.0H15"/></svg>
<svg class="ic" style="left:614px;top:249px" width="16" height="14" viewBox="0 0 16 14" fill="none" stroke="#b0b0b0" stroke-width="1.2"><path d="M1 1.5H15"/><path d="M1 5.0H15"/><path d="M1 8.5H15"/><path d="M1 12.0H15"/></svg><svg class="ic" style="left:633px;top:253px" width="7" height="5" viewBox="0 0 7 5" fill="none" stroke="#c5c5c5" stroke-width="1"><path d="M1 1l2.5 2.5L6 1"/></svg>
<div class="t" style="left:652px;top:249px;font-size:9.5px;color:#b0b0b0">&#8250;&#182;</div>
<div class="t" style="left:674px;top:249px;font-size:9.5px;color:#b0b0b0">&#182;&#8249;</div>
<svg class="ic" style="left:697px;top:250px" width="12" height="10" viewBox="0 0 12 10" fill="none" stroke="#b0b0b0" stroke-width="1.1"><path d="M1 2h4M1 5h4M1 8h4M7 2h4M7 5h4M7 8h4"/></svg><svg class="ic" style="left:715px;top:253px" width="7" height="5" viewBox="0 0 7 5" fill="none" stroke="#c5c5c5" stroke-width="1"><path d="M1 1l2.5 2.5L6 1"/></svg>
<div class="gl" style="left:624px">Paragraph</div>
<svg class="dl" style="left:760px" viewBox="0 0 8 8" fill="none" stroke="#bbb" stroke-width="1"><path d="M.5 3.5V.5h7v7h-3M2 2l4 4M6 3.5V6H3.5"/></svg>
<div class="sep" style="left:772px"></div>
<!-- Drawing -->
<svg class="ic" style="left:784px;top:212px" width="28" height="28" viewBox="0 0 28 28"><rect x="1" y="1" width="17" height="17" fill="#5ea3e8" stroke="#2b6fc0" stroke-width="1"/><circle cx="18" cy="18" r="8.5" fill="#fff" stroke="#444" stroke-width="1.3"/></svg>
<div class="rl" style="left:777px;top:244px;width:40px">Shapes</div><svg class="ic" style="left:794px;top:261px" width="7" height="5" viewBox="0 0 7 5" fill="none" stroke="#333" stroke-width="1"><path d="M1 1l2.5 2.5L6 1"/></svg>
<svg class="ic" style="left:825px;top:212px" width="28" height="28" viewBox="0 0 28 28"><rect x="7" y="7" width="14" height="14" fill="#f8c978" stroke="#e8a84a" stroke-width="1"/><rect x="1.5" y="1.5" width="10" height="10" fill="#fff" stroke="#444" stroke-width="1.3"/><rect x="16.5" y="16.5" width="10" height="10" fill="#fff" stroke="#444" stroke-width="1.3"/></svg>
<div class="rl" style="left:818px;top:244px;width:42px">Arrange</div><svg class="ic" style="left:835px;top:261px" width="7" height="5" viewBox="0 0 7 5" fill="none" stroke="#333" stroke-width="1"><path d="M1 1l2.5 2.5L6 1"/></svg>
<svg class="ic" style="left:867px;top:212px" width="28" height="28" viewBox="0 0 28 28" fill="none"><rect x="1" y="1" width="25" height="25" rx="2" fill="#f2f2f2" stroke="#c8c8c8" stroke-width="1.2"/><path d="M26 8L14 20l-3 3 1-4L24 7z" fill="#fff" stroke="#bbb" stroke-width="1.1"/></svg>
<div class="rl" style="left:866px;top:244px;width:30px;color:#b5b5b5">Quick</div>
<div class="rl" style="left:862px;top:258px;width:40px;color:#b5b5b5">Styles &#8964;</div>
<svg class="ic" style="left:906px;top:212px" width="18" height="16" viewBox="0 0 18 16" fill="none" stroke="#b0b0b0" stroke-width="1.1"><path d="M4 6l5-5 5 5-5 5z"/><rect x="1" y="12" width="16" height="3" fill="#b0b0b0" stroke="none"/></svg><svg class="ic" style="left:931px;top:218px" width="7" height="5" viewBox="0 0 7 5" fill="none" stroke="#c5c5c5" stroke-width="1"><path d="M1 1l2.5 2.5L6 1"/></svg>
<svg class="ic" style="left:906px;top:235px" width="18" height="16" viewBox="0 0 18 16" fill="none" stroke="#b0b0b0" stroke-width="1.1"><rect x="2" y="1.5" width="10" height="9"/><path d="M7 9l7-7 1.5 1.5-7 7H7z"/><rect x="1" y="12" width="16" height="3" fill="#b0b0b0" stroke="none"/></svg><svg class="ic" style="left:931px;top:241px" width="7" height="5" viewBox="0 0 7 5" fill="none" stroke="#c5c5c5" stroke-width="1"><path d="M1 1l2.5 2.5L6 1"/></svg>
<svg class="ic" style="left:906px;top:258px" width="17" height="14" viewBox="0 0 17 14" fill="none" stroke="#b0b0b0" stroke-width="1.1"><path d="M2 9l7-7 6 3-7 7z" fill="#d0d0d0"/><path d="M2 9l6 3"/></svg><svg class="ic" style="left:927px;top:263px" width="7" height="5" viewBox="0 0 7 5" fill="none" stroke="#c5c5c5" stroke-width="1"><path d="M1 1l2.5 2.5L6 1"/></svg>
<div class="gl" style="left:837px">Drawing</div>
<svg class="dl" style="left:941px" viewBox="0 0 8 8" fill="none" stroke="#bbb" stroke-width="1"><path d="M.5 3.5V.5h7v7h-3M2 2l4 4M6 3.5V6H3.5"/></svg>
<div class="sep" style="left:953px"></div>
<!-- Editing -->
<svg class="ic" style="left:960px;top:211px" width="31" height="30" viewBox="0 0 31 30" fill="none" stroke="#444" stroke-width="1.3"><circle cx="19.5" cy="11" r="9.5"/><path d="M12.5 17.5L1.5 28.5"/></svg>
<div class="rl" style="left:957px;top:244px;width:40px">Editing</div><svg class="ic" style="left:974px;top:259px" width="7" height="5" viewBox="0 0 7 5" fill="none" stroke="#333" stroke-width="1"><path d="M1 1l2.5 2.5L6 1"/></svg>
<div class="sep" style="left:1002px"></div>
<!-- Acrobat -->
<svg class="ic" style="left:1028px;top:213px" width="25" height="26" viewBox="0 0 25 26" fill="none" stroke="#4a7fc4" stroke-width="1.1"><path d="M2 1h11l5 5v8"/><path d="M2 1v19h9"/><path d="M13 1v5h5"/><path d="M6 13c2-1 3-4 3.5-7 .5 3 2 5 4 6.5-2.5 0-6 .5-7.5.5z"/><path d="M14 19l4-4a2 2 0 0 1 3 3l-4 4a2 2 0 0 1-3-3zM16 17l3 3" stroke-width="1.3"/></svg>
<div class="rl" style="left:1016px;top:244px;width:40px">Create</div>
<div class="rl" style="left:1016px;top:258px;width:40px">a PDF</div>
<div class="gl" style="left:1004px">Adobe Acrobat</div>
<div class="sep" style="left:1072px"></div>
<!-- Voice -->
<svg class="ic" style="left:1087px;top:211px" width="21" height="31" viewBox="0 0 21 31"><rect x="5" y="1" width="11" height="19" rx="5.5" fill="#72a9e6" stroke="#3b73b8" stroke-width="1"/><path d="M1.5 14a9 9 0 0 0 18 0M10.5 23v7" fill="none" stroke="#444" stroke-width="1.3"/></svg>
<div class="rl" style="left:1077px;top:246px;width:40px">Dictate</div><svg class="ic" style="left:1094px;top:262px" width="7" height="5" viewBox="0 0 7 5" fill="none" stroke="#333" stroke-width="1"><path d="M1 1l2.5 2.5L6 1"/></svg>
<div class="gl" style="left:1087px">Voice</div>
<div class="sep" style="left:1124px"></div>
<!-- Sensitivity -->
<svg class="ic" style="left:1146px;top:212px" width="26" height="27" viewBox="0 0 26 27" fill="none" stroke="#c0c0c0" stroke-width="1.1"><path d="M1 6h13v20H1z" fill="#f3f3f3"/><path d="M5 18l10-10 3 3-10 10z" fill="#ddd"/><path d="M16 6l4-4 4 4-4 4z"/></svg>
<div class="rl" style="left:1129px;top:244px;width:56px;color:#b8b8b8">Sensitivity</div><svg class="ic" style="left:1153px;top:259px" width="7" height="5" viewBox="0 0 7 5" fill="none" stroke="#ccc" stroke-width="1"><path d="M1 1l2.5 2.5L6 1"/></svg>
<div class="gl" style="left:1136px">Sensitivity</div>
<div class="sep" style="left:1189px"></div>
<!-- Add-ins -->
<svg class="ic" style="left:1203px;top:213px" width="26" height="26" viewBox="0 0 26 26" fill="none" stroke="#d0603f" stroke-width="1.4"><rect x="1" y="1" width="24" height="24" fill="#fff4ef"/><rect x="4" y="4" width="7.5" height="7.5"/><rect x="14.5" y="4" width="7.5" height="7.5"/><rect x="4" y="14.5" width="7.5" height="7.5"/><rect x="14.5" y="14.5" width="7.5" height="7.5"/></svg>
<div class="rl" style="left:1196px;top:244px;width:42px">Add-ins</div>
<div class="gl" style="left:1200px">Add-ins</div>
<div class="sep" style="left:1245px"></div>
<svg class="ic" style="left:1259px;top:212px" width="28" height="28" viewBox="0 0 28 28" fill="none" stroke="#c2c2c2" stroke-width="1.3"><path d="M6 1L1 11h5l-2 8" /><rect x="9" y="9" width="17" height="16" fill="#f2f2f2"/><path d="M9 17h9v8"/></svg>
<div class="rl" style="left:1251px;top:244px;width:48px;color:#bdbdbd">Designer</div>
<svg class="ic" style="left:1303px;top:212px" width="28" height="28" viewBox="0 0 28 28" fill="none" stroke="#c2c2c2" stroke-width="1.3"><path d="M6 3h12c4 0 6 4 4 8l-3 12c-1 3-3 4-6 4H9c-4 0-7-3-6-7l3-10z" fill="#efefef"/><path d="M12 3l-5 24M20 3l-5 24"/></svg>
<div class="rl" style="left:1297px;top:244px;width:40px;color:#bdbdbd">Copilot</div>
<div class="sep" style="left:1344px"></div>
<svg class="ic" style="left:1401px;top:279px" width="10" height="6" viewBox="0 0 10 6" fill="none" stroke="#444" stroke-width="1.1"><path d="M1 1l4 4 4-4"/></svg>

<!-- slide pane -->
<div class="a" style="left:409px;top:296px;width:1px;height:557px;background:#e3e2e6"></div>
<div class="num" style="top:310px">3</div><div class="star" style="top:323px">&#9733;</div>
<div class="num" style="top:486px">4</div><div class="star" style="top:499px">&#9733;</div>
<div class="num" style="top:661px;color:#c8502e">5</div><div class="star" style="top:675px">&#9733;</div>
<div class="num" style="top:838px">6</div>
<div class="th" style="top:312px">
 <svg class="a" style="left:0;bottom:0" width="277" height="17" viewBox="0 0 277 17"><path d="M-18.8 0L-5.7 0L-13.9 17L-27.7 17z" fill="#a07f57"/><path d="M-18.8 0L-27.7 17" stroke="#7a6347" stroke-width=".7" opacity=".55"/><path d="M-5.7 0L7.4 0L-0.0 17L-13.9 17z" fill="#a07f57"/><path d="M-12.0 13.1L1.7 13.1" stroke="#7d6649" stroke-width=".8" opacity=".6"/><path d="M-5.7 0L-13.9 17" stroke="#7a6347" stroke-width=".7" opacity=".55"/><path d="M7.4 0L20.5 0L13.8 17L-0.0 17z" fill="#9a784f"/><path d="M3.6 8.7L17.1 8.7" stroke="#7d6649" stroke-width=".8" opacity=".6"/><path d="M7.4 0L-0.0 17" stroke="#7a6347" stroke-width=".7" opacity=".55"/><path d="M20.5 0L33.6 0L27.7 17L13.8 17z" fill="#9a784f"/><path d="M18.2 5.9L31.5 5.9" stroke="#7d6649" stroke-width=".8" opacity=".6"/><path d="M20.5 0L13.8 17" stroke="#7a6347" stroke-width=".7" opacity=".55"/><path d="M33.6 0L46.7 0L41.5 17L27.7 17z" fill="#8f6d45"/><path d="M33.6 0L27.7 17" stroke="#7a6347" stroke-width=".7" opacity=".55"/><path d="M46.7 0L59.8 0L55.4 17L41.5 17z" fill="#8f6d45"/><path d="M46.7 0L41.5 17" stroke="#7a6347" stroke-width=".7" opacity=".55"/><path d="M59.8 0L72.9 0L69.2 17L55.4 17z" fill="#a07f57"/><path d="M59.8 0L55.4 17" stroke="#7a6347" stroke-width=".7" opacity=".55"/><path d="M72.9 0L86.0 0L83.1 17L69.2 17z" fill="#9a784f"/><path d="M72.9 0L69.2 17" stroke="#7a6347" stroke-width=".7" opacity=".55"/><path d="M86.0 0L99.2 0L96.9 17L83.1 17z" fill="#8f6d45"/><path d="M85.3 4.5L98.6 4.5" stroke="#7d6649" stroke-width=".8" opacity=".6"/><path d="M86.0 0L83.1 17" stroke="#7a6347" stroke-width=".7" opacity=".55"/><path d="M99.2 0L112.3 0L110.8 17L96.9 17z" fill="#9a784f"/><path d="M99.2 0L96.9 17" stroke="#7a6347" stroke-width=".7" opacity=".55"/><path d="M112.3 0L125.4 0L124.6 17L110.8 17z" fill="#a07f57"/><path d="M111.4 9.7L125.0 9.7" stroke="#7d6649" stroke-width=".8" opacity=".6"/><path d="M112.3 0L110.8 17" stroke="#7a6347" stroke-width=".7" opacity=".55"/><path d="M125.4 0L138.5 0L138.5 17L124.6 17z" fill="#9a784f"/><path d="M125.4 0L124.6 17" stroke="#7a6347" stroke-width=".7" opacity=".55"/><path d="M138.5 0L151.6 0L152.3 17L138.5 17z" fill="#86653e"/><path d="M138.5 10.6L152.1 10.6" stroke="#7d6649" stroke-width=".8" opacity=".6"/><path d="M138.5 0L138.5 17" stroke="#7a6347" stroke-width=".7" opacity=".55"/><path d="M151.6 0L164.7 0L166.2 17L152.3 17z" fill="#a07f57"/><path d="M151.6 0L152.3 17" stroke="#7a6347" stroke-width=".7" opacity=".55"/><path d="M164.7 0L177.8 0L180.1 17L166.2 17z" fill="#a07f57"/><path d="M164.7 0L166.2 17" stroke="#7a6347" stroke-width=".7" opacity=".55"/><path d="M177.8 0L190.9 0L193.9 17L180.1 17z" fill="#8f6d45"/><path d="M177.8 0L180.1 17" stroke="#7a6347" stroke-width=".7" opacity=".55"/><path d="M190.9 0L204.0 0L207.7 17L193.9 17z" fill="#86653e"/><path d="M190.9 0L193.9 17" stroke="#7a6347" stroke-width=".7" opacity=".55"/><path d="M204.0 0L217.1 0L221.6 17L207.7 17z" fill="#86653e"/><path d="M206.1 9.3L219.6 9.3" stroke="#7d6649" stroke-width=".8" opacity=".6"/><path d="M204.0 0L207.7 17" stroke="#7a6347" stroke-width=".7" opacity=".55"/><path d="M217.1 0L230.2 0L235.4 17L221.6 17z" fill="#8f6d45"/><path d="M220.5 13.0L234.2 13.0" stroke="#7d6649" stroke-width=".8" opacity=".6"/><path d="M217.1 0L221.6 17" stroke="#7a6347" stroke-width=".7" opacity=".55"/><path d="M230.2 0L243.3 0L249.3 17L235.4 17z" fill="#a07f57"/><path d="M230.9 2.2L244.1 2.2" stroke="#7d6649" stroke-width=".8" opacity=".6"/><path d="M230.2 0L235.4 17" stroke="#7a6347" stroke-width=".7" opacity=".55"/><path d="M243.3 0L256.4 0L263.1 17L249.3 17z" fill="#8f6d45"/><path d="M248.3 14.1L262.0 14.1" stroke="#7d6649" stroke-width=".8" opacity=".6"/><path d="M243.3 0L249.3 17" stroke="#7a6347" stroke-width=".7" opacity=".55"/><path d="M256.4 0L269.5 0L277.0 17L263.1 17z" fill="#8f6d45"/><path d="M262.3 14.7L276.0 14.7" stroke="#7d6649" stroke-width=".8" opacity=".6"/><path d="M256.4 0L263.1 17" stroke="#7a6347" stroke-width=".7" opacity=".55"/><path d="M269.5 0L282.7 0L290.9 17L277.0 17z" fill="#a07f57"/><path d="M273.7 9.4L287.2 9.4" stroke="#7d6649" stroke-width=".8" opacity=".6"/><path d="M269.5 0L277.0 17" stroke="#7a6347" stroke-width=".7" opacity=".55"/><path d="M282.7 0L295.8 0L304.7 17L290.9 17z" fill="#9a784f"/><path d="M282.7 0L290.9 17" stroke="#7a6347" stroke-width=".7" opacity=".55"/><rect width="277" height="17" fill="url(#fshade)"/><rect width="277" height="1.5" fill="#6f5a40" opacity=".5"/></svg>
 <div class="ser" style="left:67px;top:13px;font-size:16.5px;font-weight:bold">Executive Programs</div>
  <div class="a" style="left:100px;top:40px;width:74px;height:16px;background:#f6c8d4;border:1px solid #6a4a55"></div>
 <div class="a" style="left:89px;top:58px;width:94px;height:16px;background:#b4b5b8;border:1px solid #555"></div>
 <div class="a" style="left:81px;top:77px;width:111px;height:16px;background:#ef93aa;border:1px solid #6a4a55"></div>
 <div class="a" style="left:73px;top:95px;width:129px;height:17px;background:#97a3cb;border:1px solid #4a4f6a"></div>
 <div class="a" style="left:61px;top:117px;width:153px;height:15px;background:#bdc7e4;border:1px solid #4a4f6a"></div>
 <div class="a" style="left:51px;top:135px;width:173px;height:15px;background:#ebe6f2;border:1px solid #6a5a6a"></div>
 <div class="ser" style="left:100px;top:41.5px;width:74px;text-align:center;font-size:6.9px;font-weight:bold;letter-spacing:-.1px">Preschool Education</div>
 <div class="ser" style="left:89px;top:59.5px;width:94px;text-align:center;font-size:6.9px;font-weight:bold;letter-spacing:-.1px">Basic Education</div>
 <div class="ser" style="left:81px;top:77.5px;width:111px;text-align:center;font-size:6.9px;font-weight:bold;letter-spacing:-.1px">Secondary Education</div>
 <div class="ser" style="left:73px;top:95.5px;width:129px;text-align:center;font-size:6.9px;font-weight:bold;letter-spacing:-.1px">Vocational Education</div>
 <div class="ser" style="left:61px;top:114.5px;width:153px;text-align:center;font-size:6.9px;font-weight:bold;letter-spacing:-.1px">Non-Formal Education</div>
 <div class="ser" style="left:51px;top:132.5px;width:173px;text-align:center;font-size:6.9px;font-weight:bold;letter-spacing:-.1px">Governance and Management</div>
</div>
<div class="th" style="top:488px">
 <svg class="a" style="left:0;bottom:0" width="277" height="16" viewBox="0 0 277 16"><path d="M-19.0 0L-5.9 0L-13.9 16L-27.7 16z" fill="#9a8366"/><path d="M-22.1 5.7L-8.7 5.7" stroke="#7d6649" stroke-width=".8" opacity=".6"/><path d="M-19.0 0L-27.7 16" stroke="#7a6347" stroke-width=".7" opacity=".55"/><path d="M-5.9 0L7.2 0L-0.0 16L-13.9 16z" fill="#a38d70"/><path d="M-5.9 0L-13.9 16" stroke="#7a6347" stroke-width=".7" opacity=".55"/><path d="M7.2 0L20.4 0L13.8 16L-0.0 16z" fill="#a38d70"/><path d="M2.5 10.5L16.1 10.5" stroke="#7d6649" stroke-width=".8" opacity=".6"/><path d="M7.2 0L-0.0 16" stroke="#7a6347" stroke-width=".7" opacity=".55"/><path d="M20.4 0L33.5 0L27.7 16L13.8 16z" fill="#a38d70"/><path d="M15.7 11.6L29.3 11.6" stroke="#7d6649" stroke-width=".8" opacity=".6"/><path d="M20.4 0L13.8 16" stroke="#7a6347" stroke-width=".7" opacity=".55"/><path d="M33.5 0L46.6 0L41.5 16L27.7 16z" fill="#ab967a"/><path d="M33.5 0L27.7 16" stroke="#7a6347" stroke-width=".7" opacity=".55"/><path d="M46.6 0L59.7 0L55.4 16L41.5 16z" fill="#ab967a"/><path d="M45.3 4.3L58.6 4.3" stroke="#7d6649" stroke-width=".8" opacity=".6"/><path d="M46.6 0L41.5 16" stroke="#7a6347" stroke-width=".7" opacity=".55"/><path d="M59.7 0L72.9 0L69.2 16L55.4 16z" fill="#ab967a"/><path d="M58.0 6.6L71.4 6.6" stroke="#7d6649" stroke-width=".8" opacity=".6"/><path d="M59.7 0L55.4 16" stroke="#7a6347" stroke-width=".7" opacity=".55"/><path d="M72.9 0L86.0 0L83.1 16L69.2 16z" fill="#b29e83"/><path d="M71.8 4.6L85.2 4.6" stroke="#7d6649" stroke-width=".8" opacity=".6"/><path d="M72.9 0L69.2 16" stroke="#7a6347" stroke-width=".7" opacity=".55"/><path d="M86.0 0L99.1 0L96.9 16L83.1 16z" fill="#9a8366"/><path d="M86.0 0L83.1 16" stroke="#7a6347" stroke-width=".7" opacity=".55"/><path d="M99.1 0L112.2 0L110.8 16L96.9 16z" fill="#9a8366"/><path d="M99.1 0L96.9 16" stroke="#7a6347" stroke-width=".7" opacity=".55"/><path d="M112.2 0L125.4 0L124.6 16L110.8 16z" fill="#a38d70"/><path d="M111.6 6.7L125.1 6.7" stroke="#7d6649" stroke-width=".8" opacity=".6"/><path d="M112.2 0L110.8 16" stroke="#7a6347" stroke-width=".7" opacity=".55"/><path d="M125.4 0L138.5 0L138.5 16L124.6 16z" fill="#a38d70"/><path d="M125.2 3.8L138.5 3.8" stroke="#7d6649" stroke-width=".8" opacity=".6"/><path d="M125.4 0L124.6 16" stroke="#7a6347" stroke-width=".7" opacity=".55"/><path d="M138.5 0L151.6 0L152.3 16L138.5 16z" fill="#b29e83"/><path d="M138.5 11.3L152.1 11.3" stroke="#7d6649" stroke-width=".8" opacity=".6"/><path d="M138.5 0L138.5 16" stroke="#7a6347" stroke-width=".7" opacity=".55"/><path d="M151.6 0L164.8 0L166.2 16L152.3 16z" fill="#9a8366"/><path d="M151.6 0L152.3 16" stroke="#7a6347" stroke-width=".7" opacity=".55"/><path d="M164.8 0L177.9 0L180.1 16L166.2 16z" fill="#b29e83"/><path d="M165.0 3.1L178.3 3.1" stroke="#7d6649" stroke-width=".8" opacity=".6"/><path d="M164.8 0L166.2 16" stroke="#7a6347" stroke-width=".7" opacity=".55"/><path d="M177.9 0L191.0 0L193.9 16L180.1 16z" fill="#ab967a"/><path d="M178.7 6.4L192.2 6.4" stroke="#7d6649" stroke-width=".8" opacity=".6"/><path d="M177.9 0L180.1 16" stroke="#7a6347" stroke-width=".7" opacity=".55"/><path d="M191.0 0L204.1 0L207.7 16L193.9 16z" fill="#b29e83"/><path d="M192.6 9.0L206.2 9.0" stroke="#7d6649" stroke-width=".8" opacity=".6"/><path d="M191.0 0L193.9 16" stroke="#7a6347" stroke-width=".7" opacity=".55"/><path d="M204.1 0L217.3 0L221.6 16L207.7 16z" fill="#ab967a"/><path d="M204.1 0L207.7 16" stroke="#7a6347" stroke-width=".7" opacity=".55"/><path d="M217.3 0L230.4 0L235.4 16L221.6 16z" fill="#ab967a"/><path d="M217.3 0L221.6 16" stroke="#7a6347" stroke-width=".7" opacity=".55"/><path d="M230.4 0L243.5 0L249.3 16L235.4 16z" fill="#9a8366"/><path d="M230.4 0L235.4 16" stroke="#7a6347" stroke-width=".7" opacity=".55"/><path d="M243.5 0L256.6 0L263.1 16L249.3 16z" fill="#ab967a"/><path d="M243.5 0L249.3 16" stroke="#7a6347" stroke-width=".7" opacity=".55"/><path d="M256.6 0L269.8 0L277.0 16L263.1 16z" fill="#ab967a"/><path d="M256.6 0L263.1 16" stroke="#7a6347" stroke-width=".7" opacity=".55"/><path d="M269.8 0L282.9 0L290.9 16L277.0 16z" fill="#ab967a"/><path d="M269.8 0L277.0 16" stroke="#7a6347" stroke-width=".7" opacity=".55"/><path d="M282.9 0L296.0 0L304.7 16L290.9 16z" fill="#b29e83"/><path d="M282.9 0L290.9 16" stroke="#7a6347" stroke-width=".7" opacity=".55"/><rect width="277" height="16" fill="url(#fshade)"/><rect width="277" height="1.5" fill="#6f5a40" opacity=".5"/></svg>
 <div class="pn" style="left:18px;top:15px;width:241px;height:127px"></div>
 <div class="ser" style="left:0;width:267px;text-align:center;top:48px;font-size:17px;font-weight:bold;line-height:24.7px">Summary of program<br>priorities</div>
</div>
<div class="a" style="left:97px;top:661px;width:281px;height:162px;border:2px solid #c8502e;border-radius:6px"></div>
<div class="th" style="left:100px;top:664px;width:275px;height:156px;border-radius:3px">
 <svg class="a" style="left:0;bottom:0" width="275" height="16" viewBox="0 0 275 16"><path d="M-18.9 0L-5.8 0L-13.8 16L-27.5 16z" fill="#a38d70"/><path d="M-20.6 3.2L-7.4 3.2" stroke="#7d6649" stroke-width=".8" opacity=".6"/><path d="M-18.9 0L-27.5 16" stroke="#7a6347" stroke-width=".7" opacity=".55"/><path d="M-5.8 0L7.2 0L0.0 16L-13.8 16z" fill="#a38d70"/><path d="M-5.8 0L-13.8 16" stroke="#7a6347" stroke-width=".7" opacity=".55"/><path d="M7.2 0L20.2 0L13.8 16L0.0 16z" fill="#9a8366"/><path d="M2.5 10.5L16.0 10.5" stroke="#7d6649" stroke-width=".8" opacity=".6"/><path d="M7.2 0L0.0 16" stroke="#7a6347" stroke-width=".7" opacity=".55"/><path d="M20.2 0L33.3 0L27.5 16L13.8 16z" fill="#9a8366"/><path d="M15.0 12.9L28.6 12.9" stroke="#7d6649" stroke-width=".8" opacity=".6"/><path d="M20.2 0L13.8 16" stroke="#7a6347" stroke-width=".7" opacity=".55"/><path d="M33.3 0L46.3 0L41.2 16L27.5 16z" fill="#b29e83"/><path d="M31.8 4.1L45.0 4.1" stroke="#7d6649" stroke-width=".8" opacity=".6"/><path d="M33.3 0L27.5 16" stroke="#7a6347" stroke-width=".7" opacity=".55"/><path d="M46.3 0L59.3 0L55.0 16L41.2 16z" fill="#a38d70"/><path d="M43.8 7.8L57.2 7.8" stroke="#7d6649" stroke-width=".8" opacity=".6"/><path d="M46.3 0L41.2 16" stroke="#7a6347" stroke-width=".7" opacity=".55"/><path d="M59.3 0L72.3 0L68.8 16L55.0 16z" fill="#a38d70"/><path d="M55.8 13.0L69.4 13.0" stroke="#7d6649" stroke-width=".8" opacity=".6"/><path d="M59.3 0L55.0 16" stroke="#7a6347" stroke-width=".7" opacity=".55"/><path d="M72.3 0L85.4 0L82.5 16L68.8 16z" fill="#ab967a"/><path d="M72.3 0L68.8 16" stroke="#7a6347" stroke-width=".7" opacity=".55"/><path d="M85.4 0L98.4 0L96.2 16L82.5 16z" fill="#a38d70"/><path d="M84.1 7.3L97.4 7.3" stroke="#7d6649" stroke-width=".8" opacity=".6"/><path d="M85.4 0L82.5 16" stroke="#7a6347" stroke-width=".7" opacity=".55"/><path d="M98.4 0L111.4 0L110.0 16L96.2 16z" fill="#a38d70"/><path d="M97.7 5.4L111.0 5.4" stroke="#7d6649" stroke-width=".8" opacity=".6"/><path d="M98.4 0L96.2 16" stroke="#7a6347" stroke-width=".7" opacity=".55"/><path d="M111.4 0L124.5 0L123.8 16L110.0 16z" fill="#ab967a"/><path d="M111.1 3.7L124.3 3.7" stroke="#7d6649" stroke-width=".8" opacity=".6"/><path d="M111.4 0L110.0 16" stroke="#7a6347" stroke-width=".7" opacity=".55"/><path d="M124.5 0L137.5 0L137.5 16L123.8 16z" fill="#b29e83"/><path d="M124.5 0L123.8 16" stroke="#7a6347" stroke-width=".7" opacity=".55"/><path d="M137.5 0L150.5 0L151.2 16L137.5 16z" fill="#ab967a"/><path d="M137.5 0L137.5 16" stroke="#7a6347" stroke-width=".7" opacity=".55"/><path d="M150.5 0L163.6 0L165.0 16L151.2 16z" fill="#a38d70"/><path d="M150.8 6.3L164.1 6.3" stroke="#7d6649" stroke-width=".8" opacity=".6"/><path d="M150.5 0L151.2 16" stroke="#7a6347" stroke-width=".7" opacity=".55"/><path d="M163.6 0L176.6 0L178.8 16L165.0 16z" fill="#9a8366"/><path d="M163.6 0L165.0 16" stroke="#7a6347" stroke-width=".7" opacity=".55"/><path d="M176.6 0L189.6 0L192.5 16L178.8 16z" fill="#a38d70"/><path d="M176.6 0L178.8 16" stroke="#7a6347" stroke-width=".7" opacity=".55"/><path d="M189.6 0L202.7 0L206.2 16L192.5 16z" fill="#a38d70"/><path d="M191.6 10.8L205.1 10.8" stroke="#7d6649" stroke-width=".8" opacity=".6"/><path d="M189.6 0L192.5 16" stroke="#7a6347" stroke-width=".7" opacity=".55"/><path d="M202.7 0L215.7 0L220.0 16L206.2 16z" fill="#9a8366"/><path d="M203.3 2.9L216.5 2.9" stroke="#7d6649" stroke-width=".8" opacity=".6"/><path d="M202.7 0L206.2 16" stroke="#7a6347" stroke-width=".7" opacity=".55"/><path d="M215.7 0L228.7 0L233.8 16L220.0 16z" fill="#b29e83"/><path d="M215.7 0L220.0 16" stroke="#7a6347" stroke-width=".7" opacity=".55"/><path d="M228.7 0L241.7 0L247.5 16L233.8 16z" fill="#a38d70"/><path d="M228.7 0L233.8 16" stroke="#7a6347" stroke-width=".7" opacity=".55"/><path d="M241.7 0L254.8 0L261.2 16L247.5 16z" fill="#ab967a"/><path d="M241.7 0L247.5 16" stroke="#7a6347" stroke-width=".7" opacity=".55"/><path d="M254.8 0L267.8 0L275.0 16L261.2 16z" fill="#9a8366"/><path d="M258.9 10.2L272.4 10.2" stroke="#7d6649" stroke-width=".8" opacity=".6"/><path d="M254.8 0L261.2 16" stroke="#7a6347" stroke-width=".7" opacity=".55"/><path d="M267.8 0L280.8 0L288.8 16L275.0 16z" fill="#a38d70"/><path d="M267.8 0L275.0 16" stroke="#7a6347" stroke-width=".7" opacity=".55"/><path d="M280.8 0L293.9 0L302.5 16L288.8 16z" fill="#b29e83"/><path d="M280.8 0L288.8 16" stroke="#7a6347" stroke-width=".7" opacity=".55"/><rect width="275" height="16" fill="url(#fshade)"/><rect width="275" height="1.5" fill="#6f5a40" opacity=".5"/></svg>
 <div class="pn" style="left:17px;top:15px;width:241px;height:126px"></div>
 <svg class="ic" style="left:19px;top:22px" width="12" height="12" viewBox="0 0 27 27"><path d="M1 15.5l3.2-2.6 4.3 6.3C13 10.5 19 4 26.5 0.5l.3.6C20 6 14.5 13.5 9.8 26L8.4 26z" fill="#0a0a0a"/></svg><div class="ser" style="left:31px;top:18px;font-size:17.2px;font-weight:bold;line-height:20px">Preschool</div>
 <div class="ser" style="left:17px;top:40px;font-size:7.6px;line-height:9.5px;color:#333">&#10003;Preschool Expanding access to preschool education.<br>&#10003;Strengthening the capacities of preschool teachers.<br>&#10003;Rehabilitating and maintaining war-damaged preschools in Gaza.</div>
</div>
<div class="th" style="top:839px;height:30px"></div>
<div class="a" style="left:68px;top:852px;width:1358px;height:17px;background:#f5f4f7"></div>
<svg class="ic" style="left:395px;top:298px" width="10" height="8" viewBox="0 0 10 8"><path d="M1 7h8L5 2z" fill="#777"/></svg>
<svg class="ic" style="left:395px;top:841px" width="10" height="8" viewBox="0 0 10 8"><path d="M1 1h8L5 6z" fill="#777"/></svg>
<div class="a" style="left:396px;top:375px;width:8px;height:103px;border-radius:4px;background:#6e6e72"></div>
<!-- rulers -->
<div class="a" style="left:619px;top:299px;width:609px;height:11px;background:#fff"></div>
<div class="a" style="left:415px;top:320px;width:12px;height:345px;background:#fff"></div>
<svg class="ic" style="left:619px;top:299px" width="609" height="11" viewBox="0 0 609 11"><rect x="2.4" y="4.5" width="1" height="2" fill="#aaa"/><rect x="6.2" y="4.5" width="1" height="2" fill="#aaa"/><rect x="10.0" y="4.5" width="1" height="2" fill="#aaa"/><rect x="13.8" y="3.5" width="1" height="4" fill="#888"/><rect x="17.6" y="4.5" width="1" height="2" fill="#aaa"/><rect x="21.4" y="4.5" width="1" height="2" fill="#aaa"/><rect x="25.2" y="4.5" width="1" height="2" fill="#aaa"/><text x="29.6" y="9" font-size="9" text-anchor="middle" fill="#505050" font-family="Liberation Sans">9</text><rect x="32.9" y="4.5" width="1" height="2" fill="#aaa"/><rect x="36.7" y="4.5" width="1" height="2" fill="#aaa"/><rect x="40.5" y="4.5" width="1" height="2" fill="#aaa"/><rect x="44.3" y="3.5" width="1" height="4" fill="#888"/><rect x="48.1" y="4.5" width="1" height="2" fill="#aaa"/><rect x="51.9" y="4.5" width="1" height="2" fill="#aaa"/><rect x="55.7" y="4.5" width="1" height="2" fill="#aaa"/><text x="60.0" y="9" font-size="9" text-anchor="middle" fill="#505050" font-family="Liberation Sans">8</text><rect x="63.3" y="4.5" width="1" height="2" fill="#aaa"/><rect x="67.1" y="4.5" width="1" height="2" fill="#aaa"/><rect x="70.9" y="4.5" width="1" height="2" fill="#aaa"/><rect x="74.7" y="3.5" width="1" height="4" fill="#888"/><rect x="78.5" y="4.5" width="1" height="2" fill="#aaa"/><rect x="82.3" y="4.5" width="1" height="2" fill="#aaa"/><rect x="86.1" y="4.5" width="1" height="2" fill="#aaa"/><text x="90.5" y="9" font-size="9" text-anchor="middle" fill="#505050" font-family="Liberation Sans">7</text><rect x="93.8" y="4.5" width="1" height="2" fill="#aaa"/><rect x="97.6" y="4.5" width="1" height="2" fill="#aaa"/><rect x="101.4" y="4.5" width="1" height="2" fill="#aaa"/><rect x="105.2" y="3.5" width="1" height="4" fill="#888"/><rect x="109.0" y="4.5" width="1" height="2" fill="#aaa"/><rect x="112.8" y="4.5" width="1" height="2" fill="#aaa"/><rect x="116.6" y="4.5" width="1" height="2" fill="#aaa"/><text x="120.9" y="9" font-size="9" text-anchor="middle" fill="#505050" font-family="Liberation Sans">6</text><rect x="124.2" y="4.5" width="1" height="2" fill="#aaa"/><rect x="128.0" y="4.5" width="1" height="2" fill="#aaa"/><rect x="131.8" y="4.5" width="1" height="2" fill="#aaa"/><rect x="135.6" y="3.5" width="1" height="4" fill="#888"/><rect x="139.4" y="4.5" width="1" height="2" fill="#aaa"/><rect x="143.2" y="4.5" width="1" height="2" fill="#aaa"/><rect x="147.0" y="4.5" width="1" height="2" fill="#aaa"/><text x="151.4" y="9" font-size="9" text-anchor="middle" fill="#505050" font-family="Liberation Sans">5</text><rect x="154.7" y="4.5" width="1" height="2" fill="#aaa"/><rect x="158.5" y="4.5" width="1" height="2" fill="#aaa"/><rect x="162.3" y="4.5" width="1" height="2" fill="#aaa"/><rect x="166.1" y="3.5" width="1" height="4" fill="#888"/><rect x="169.9" y="4.5" width="1" height="2" fill="#aaa"/><rect x="173.7" y="4.5" width="1" height="2" fill="#aaa"/><rect x="177.5" y="4.5" width="1" height="2" fill="#aaa"/><text x="181.8" y="9" font-size="9" text-anchor="middle" fill="#505050" font-family="Liberation Sans">4</text><rect x="185.1" y="4.5" width="1" height="2" fill="#aaa"/><rect x="188.9" y="4.5" width="1" height="2" fill="#aaa"/><rect x="192.7" y="4.5" width="1" height="2" fill="#aaa"/><rect x="196.5" y="3.5" width="1" height="4" fill="#888"/><rect x="200.3" y="4.5" width="1" height="2" fill="#aaa"/><rect x="204.1" y="4.5" width="1" height="2" fill="#aaa"/><rect x="207.9" y="4.5" width="1" height="2" fill="#aaa"/><text x="212.3" y="9" font-size="9" text-anchor="middle" fill="#505050" font-family="Liberation Sans">3</text><rect x="215.6" y="4.5" width="1" height="2" fill="#aaa"/><rect x="219.4" y="4.5" width="1" height="2" fill="#aaa"/><rect x="223.2" y="4.5" width="1" height="2" fill="#aaa"/><rect x="227.0" y="3.5" width="1" height="4" fill="#888"/><rect x="230.8" y="4.5" width="1" height="2" fill="#aaa"/><rect x="234.6" y="4.5" width="1" height="2" fill="#aaa"/><rect x="238.4" y="4.5" width="1" height="2" fill="#aaa"/><text x="242.7" y="9" font-size="9" text-anchor="middle" fill="#505050" font-family="Liberation Sans">2</text><rect x="246.0" y="4.5" width="1" height="2" fill="#aaa"/><rect x="249.8" y="4.5" width="1" height="2" fill="#aaa"/><rect x="253.6" y="4.5" width="1" height="2" fill="#aaa"/><rect x="257.4" y="3.5" width="1" height="4" fill="#888"/><rect x="261.2" y="4.5" width="1" height="2" fill="#aaa"/><rect x="265.0" y="4.5" width="1" height="2" fill="#aaa"/><rect x="268.8" y="4.5" width="1" height="2" fill="#aaa"/><text x="273.2" y="9" font-size="9" text-anchor="middle" fill="#505050" font-family="Liberation Sans">1</text><rect x="276.5" y="4.5" width="1" height="2" fill="#aaa"/><rect x="280.3" y="4.5" width="1" height="2" fill="#aaa"/><rect x="284.1" y="4.5" width="1" height="2" fill="#aaa"/><rect x="287.9" y="3.5" width="1" height="4" fill="#888"/><rect x="291.7" y="4.5" width="1" height="2" fill="#aaa"/><rect x="295.5" y="4.5" width="1" height="2" fill="#aaa"/><rect x="299.3" y="4.5" width="1" height="2" fill="#aaa"/><text x="303.6" y="9" font-size="9" text-anchor="middle" fill="#505050" font-family="Liberation Sans">0</text><rect x="306.9" y="4.5" width="1" height="2" fill="#aaa"/><rect x="310.7" y="4.5" width="1" height="2" fill="#aaa"/><rect x="314.5" y="4.5" width="1" height="2" fill="#aaa"/><rect x="318.3" y="3.5" width="1" height="4" fill="#888"/><rect x="322.1" y="4.5" width="1" height="2" fill="#aaa"/><rect x="325.9" y="4.5" width="1" height="2" fill="#aaa"/><rect x="329.7" y="4.5" width="1" height="2" fill="#aaa"/><text x="334.1" y="9" font-size="9" text-anchor="middle" fill="#505050" font-family="Liberation Sans">1</text><rect x="337.4" y="4.5" width="1" height="2" fill="#aaa"/><rect x="341.2" y="4.5" width="1" height="2" fill="#aaa"/><rect x="345.0" y="4.5" width="1" height="2" fill="#aaa"/><rect x="348.8" y="3.5" width="1" height="4" fill="#888"/><rect x="352.6" y="4.5" width="1" height="2" fill="#aaa"/><rect x="356.4" y="4.5" width="1" height="2" fill="#aaa"/><rect x="360.2" y="4.5" width="1" height="2" fill="#aaa"/><text x="364.5" y="9" font-size="9" text-anchor="middle" fill="#505050" font-family="Liberation Sans">2</text><rect x="367.8" y="4.5" width="1" height="2" fill="#aaa"/><rect x="371.6" y="4.5" width="1" height="2" fill="#aaa"/><rect x="375.4" y="4.5" width="1" height="2" fill="#aaa"/><rect x="379.2" y="3.5" width="1" height="4" fill="#888"/><rect x="383.0" y="4.5" width="1" height="2" fill="#aaa"/><rect x="386.8" y="4.5" width="1" height="2" fill="#aaa"/><rect x="390.6" y="4.5" width="1" height="2" fill="#aaa"/><text x="395.0" y="9" font-size="9" text-anchor="middle" fill="#505050" font-family="Liberation Sans">3</text><rect x="398.3" y="4.5" width="1" height="2" fill="#aaa"/><rect x="402.1" y="4.5" width="1" height="2" fill="#aaa"/><rect x="405.9" y="4.5" width="1" height="2" fill="#aaa"/><rect x="409.7" y="3.5" width="1" height="4" fill="#888"/><rect x="413.5" y="4.5" width="1" height="2" fill="#aaa"/><rect x="417.3" y="4.5" width="1" height="2" fill="#aaa"/><rect x="421.1" y="4.5" width="1" height="2" fill="#aaa"/><text x="425.4" y="9" font-size="9" text-anchor="middle" fill="#505050" font-family="Liberation Sans">4</text><rect x="428.7" y="4.5" width="1" height="2" fill="#aaa"/><rect x="432.5" y="4.5" width="1" height="2" fill="#aaa"/><rect x="436.3" y="4.5" width="1" height="2" fill="#aaa"/><rect x="440.1" y="3.5" width="1" height="4" fill="#888"/><rect x="443.9" y="4.5" width="1" height="2" fill="#aaa"/><rect x="447.7" y="4.5" width="1" height="2" fill="#aaa"/><rect x="451.5" y="4.5" width="1" height="2" fill="#aaa"/><text x="455.9" y="9" font-size="9" text-anchor="middle" fill="#505050" font-family="Liberation Sans">5</text><rect x="459.2" y="4.5" width="1" height="2" fill="#aaa"/><rect x="463.0" y="4.5" width="1" height="2" fill="#aaa"/><rect x="466.8" y="4.5" width="1" height="2" fill="#aaa"/><rect x="470.6" y="3.5" width="1" height="4" fill="#888"/><rect x="474.4" y="4.5" width="1" height="2" fill="#aaa"/><rect x="478.2" y="4.5" width="1" height="2" fill="#aaa"/><rect x="482.0" y="4.5" width="1" height="2" fill="#aaa"/><text x="486.3" y="9" font-size="9" text-anchor="middle" fill="#505050" font-family="Liberation Sans">6</text><rect x="489.6" y="4.5" width="1" height="2" fill="#aaa"/><rect x="493.4" y="4.5" width="1" height="2" fill="#aaa"/><rect x="497.2" y="4.5" width="1" height="2" fill="#aaa"/><rect x="501.0" y="3.5" width="1" height="4" fill="#888"/><rect x="504.8" y="4.5" width="1" height="2" fill="#aaa"/><rect x="508.6" y="4.5" width="1" height="2" fill="#aaa"/><rect x="512.4" y="4.5" width="1" height="2" fill="#aaa"/><text x="516.8" y="9" font-size="9" text-anchor="middle" fill="#505050" font-family="Liberation Sans">7</text><rect x="520.1" y="4.5" width="1" height="2" fill="#aaa"/><rect x="523.9" y="4.5" width="1" height="2" fill="#aaa"/><rect x="527.7" y="4.5" width="1" height="2" fill="#aaa"/><rect x="531.5" y="3.5" width="1" height="4" fill="#888"/><rect x="535.3" y="4.5" width="1" height="2" fill="#aaa"/><rect x="539.1" y="4.5" width="1" height="2" fill="#aaa"/><rect x="542.9" y="4.5" width="1" height="2" fill="#aaa"/><text x="547.2" y="9" font-size="9" text-anchor="middle" fill="#505050" font-family="Liberation Sans">8</text><rect x="550.5" y="4.5" width="1" height="2" fill="#aaa"/><rect x="554.3" y="4.5" width="1" height="2" fill="#aaa"/><rect x="558.1" y="4.5" width="1" height="2" fill="#aaa"/><rect x="561.9" y="3.5" width="1" height="4" fill="#888"/><rect x="565.7" y="4.5" width="1" height="2" fill="#aaa"/><rect x="569.5" y="4.5" width="1" height="2" fill="#aaa"/><rect x="573.3" y="4.5" width="1" height="2" fill="#aaa"/><text x="577.7" y="9" font-size="9" text-anchor="middle" fill="#505050" font-family="Liberation Sans">9</text><rect x="581.0" y="4.5" width="1" height="2" fill="#aaa"/><rect x="584.8" y="4.5" width="1" height="2" fill="#aaa"/><rect x="588.6" y="4.5" width="1" height="2" fill="#aaa"/><rect x="592.4" y="3.5" width="1" height="4" fill="#888"/><rect x="596.2" y="4.5" width="1" height="2" fill="#aaa"/><rect x="600.0" y="4.5" width="1" height="2" fill="#aaa"/><rect x="603.8" y="4.5" width="1" height="2" fill="#aaa"/></svg>
<svg class="ic" style="left:415px;top:320px" width="12" height="345" viewBox="0 0 12 345"><rect x="4" y="4.3" width="4" height="1" fill="#888"/><rect x="5" y="8.1" width="2" height="1" fill="#aaa"/><rect x="5" y="11.9" width="2" height="1" fill="#aaa"/><rect x="5" y="15.7" width="2" height="1" fill="#aaa"/><text x="0" y="0" font-size="9" text-anchor="middle" fill="#505050" font-family="Liberation Sans" transform="translate(9 20.1) rotate(-90)">5</text><rect x="5" y="23.4" width="2" height="1" fill="#aaa"/><rect x="5" y="27.2" width="2" height="1" fill="#aaa"/><rect x="5" y="31.0" width="2" height="1" fill="#aaa"/><rect x="4" y="34.8" width="4" height="1" fill="#888"/><rect x="5" y="38.6" width="2" height="1" fill="#aaa"/><rect x="5" y="42.4" width="2" height="1" fill="#aaa"/><rect x="5" y="46.2" width="2" height="1" fill="#aaa"/><text x="0" y="0" font-size="9" text-anchor="middle" fill="#505050" font-family="Liberation Sans" transform="translate(9 50.5) rotate(-90)">4</text><rect x="5" y="53.8" width="2" height="1" fill="#aaa"/><rect x="5" y="57.6" width="2" height="1" fill="#aaa"/><rect x="5" y="61.4" width="2" height="1" fill="#aaa"/><rect x="4" y="65.2" width="4" height="1" fill="#888"/><rect x="5" y="69.0" width="2" height="1" fill="#aaa"/><rect x="5" y="72.8" width="2" height="1" fill="#aaa"/><rect x="5" y="76.6" width="2" height="1" fill="#aaa"/><text x="0" y="0" font-size="9" text-anchor="middle" fill="#505050" font-family="Liberation Sans" transform="translate(9 81.0) rotate(-90)">3</text><rect x="5" y="84.3" width="2" height="1" fill="#aaa"/><rect x="5" y="88.1" width="2" height="1" fill="#aaa"/><rect x="5" y="91.9" width="2" height="1" fill="#aaa"/><rect x="4" y="95.7" width="4" height="1" fill="#888"/><rect x="5" y="99.5" width="2" height="1" fill="#aaa"/><rect x="5" y="103.3" width="2" height="1" fill="#aaa"/><rect x="5" y="107.1" width="2" height="1" fill="#aaa"/><text x="0" y="0" font-size="9" text-anchor="middle" fill="#505050" font-family="Liberation Sans" transform="translate(9 111.4) rotate(-90)">2</text><rect x="5" y="114.7" width="2" height="1" fill="#aaa"/><rect x="5" y="118.5" width="2" height="1" fill="#aaa"/><rect x="5" y="122.3" width="2" height="1" fill="#aaa"/><rect x="4" y="126.1" width="4" height="1" fill="#888"/><rect x="5" y="129.9" width="2" height="1" fill="#aaa"/><rect x="5" y="133.7" width="2" height="1" fill="#aaa"/><rect x="5" y="137.5" width="2" height="1" fill="#aaa"/><text x="0" y="0" font-size="9" text-anchor="middle" fill="#505050" font-family="Liberation Sans" transform="translate(9 141.9) rotate(-90)">1</text><rect x="5" y="145.2" width="2" height="1" fill="#aaa"/><rect x="5" y="149.0" width="2" height="1" fill="#aaa"/><rect x="5" y="152.8" width="2" height="1" fill="#aaa"/><rect x="4" y="156.6" width="4" height="1" fill="#888"/><rect x="5" y="160.4" width="2" height="1" fill="#aaa"/><rect x="5" y="164.2" width="2" height="1" fill="#aaa"/><rect x="5" y="168.0" width="2" height="1" fill="#aaa"/><text x="0" y="0" font-size="9" text-anchor="middle" fill="#505050" font-family="Liberation Sans" transform="translate(9 172.3) rotate(-90)">0</text><rect x="5" y="175.6" width="2" height="1" fill="#aaa"/><rect x="5" y="179.4" width="2" height="1" fill="#aaa"/><rect x="5" y="183.2" width="2" height="1" fill="#aaa"/><rect x="4" y="187.0" width="4" height="1" fill="#888"/><rect x="5" y="190.8" width="2" height="1" fill="#aaa"/><rect x="5" y="194.6" width="2" height="1" fill="#aaa"/><rect x="5" y="198.4" width="2" height="1" fill="#aaa"/><text x="0" y="0" font-size="9" text-anchor="middle" fill="#505050" font-family="Liberation Sans" transform="translate(9 202.8) rotate(-90)">1</text><rect x="5" y="206.1" width="2" height="1" fill="#aaa"/><rect x="5" y="209.9" width="2" height="1" fill="#aaa"/><rect x="5" y="213.7" width="2" height="1" fill="#aaa"/><rect x="4" y="217.5" width="4" height="1" fill="#888"/><rect x="5" y="221.3" width="2" height="1" fill="#aaa"/><rect x="5" y="225.1" width="2" height="1" fill="#aaa"/><rect x="5" y="228.9" width="2" height="1" fill="#aaa"/><text x="0" y="0" font-size="9" text-anchor="middle" fill="#505050" font-family="Liberation Sans" transform="translate(9 233.2) rotate(-90)">2</text><rect x="5" y="236.5" width="2" height="1" fill="#aaa"/><rect x="5" y="240.3" width="2" height="1" fill="#aaa"/><rect x="5" y="244.1" width="2" height="1" fill="#aaa"/><rect x="4" y="247.9" width="4" height="1" fill="#888"/><rect x="5" y="251.7" width="2" height="1" fill="#aaa"/><rect x="5" y="255.5" width="2" height="1" fill="#aaa"/><rect x="5" y="259.3" width="2" height="1" fill="#aaa"/><text x="0" y="0" font-size="9" text-anchor="middle" fill="#505050" font-family="Liberation Sans" transform="translate(9 263.6) rotate(-90)">3</text><rect x="5" y="267.0" width="2" height="1" fill="#aaa"/><rect x="5" y="270.8" width="2" height="1" fill="#aaa"/><rect x="5" y="274.6" width="2" height="1" fill="#aaa"/><rect x="4" y="278.4" width="4" height="1" fill="#888"/><rect x="5" y="282.2" width="2" height="1" fill="#aaa"/><rect x="5" y="286.0" width="2" height="1" fill="#aaa"/><rect x="5" y="289.8" width="2" height="1" fill="#aaa"/><text x="0" y="0" font-size="9" text-anchor="middle" fill="#505050" font-family="Liberation Sans" transform="translate(9 294.1) rotate(-90)">4</text><rect x="5" y="297.4" width="2" height="1" fill="#aaa"/><rect x="5" y="301.2" width="2" height="1" fill="#aaa"/><rect x="5" y="305.0" width="2" height="1" fill="#aaa"/><rect x="4" y="308.8" width="4" height="1" fill="#888"/><rect x="5" y="312.6" width="2" height="1" fill="#aaa"/><rect x="5" y="316.4" width="2" height="1" fill="#aaa"/><rect x="5" y="320.2" width="2" height="1" fill="#aaa"/><text x="0" y="0" font-size="9" text-anchor="middle" fill="#505050" font-family="Liberation Sans" transform="translate(9 324.6) rotate(-90)">5</text><rect x="5" y="327.9" width="2" height="1" fill="#aaa"/><rect x="5" y="331.7" width="2" height="1" fill="#aaa"/><rect x="5" y="335.5" width="2" height="1" fill="#aaa"/><rect x="4" y="339.3" width="4" height="1" fill="#888"/></svg>
<!-- main slide -->
<div class="a" style="left:618px;top:319px;width:609px;height:347px;overflow:hidden;background:linear-gradient(90deg,#c6c4c6 0,#c9c6c7 1.2%,#d8d4d2 1.6%,#dcd8d6 12%,#e3e0dd 50%,#e2dedb 85%,#dcd8d5 100%)">
 <div class="a" style="left:0;top:0;width:609px;height:60px;background:linear-gradient(180deg,rgba(205,200,198,.25),rgba(255,255,255,0))"></div>
 <svg class="a" style="left:0;bottom:0" width="609" height="37" viewBox="0 0 609 37"><path d="M-38.3 0L-23.4 0L-45.0 37L-60.9 37z" fill="#a38d70"/><path d="M-38.3 0L-60.9 37" stroke="#7a6347" stroke-width=".7" opacity=".55"/><path d="M-23.4 0L-8.5 0L-29.1 37L-45.0 37z" fill="#a08a6c"/><path d="M-37.3 23.9L-21.8 23.9" stroke="#7d6649" stroke-width=".8" opacity=".6"/><path d="M-23.4 0L-45.0 37" stroke="#7a6347" stroke-width=".7" opacity=".55"/><path d="M-8.5 0L6.4 0L-13.2 37L-29.1 37z" fill="#b29e83"/><path d="M-8.5 0L-29.1 37" stroke="#7a6347" stroke-width=".7" opacity=".55"/><path d="M6.4 0L21.3 0L2.6 37L-13.2 37z" fill="#a08a6c"/><path d="M3.8 5.0L18.8 5.0" stroke="#7d6649" stroke-width=".8" opacity=".6"/><path d="M6.4 0L-13.2 37" stroke="#7a6347" stroke-width=".7" opacity=".55"/><path d="M21.3 0L36.2 0L18.5 37L2.6 37z" fill="#a38d70"/><path d="M21.3 0L2.6 37" stroke="#7a6347" stroke-width=".7" opacity=".55"/><path d="M36.2 0L51.1 0L34.4 37L18.5 37z" fill="#b29e83"/><path d="M36.2 0L18.5 37" stroke="#7a6347" stroke-width=".7" opacity=".55"/><path d="M51.1 0L66.0 0L50.3 37L34.4 37z" fill="#b29e83"/><path d="M51.1 0L34.4 37" stroke="#7a6347" stroke-width=".7" opacity=".55"/><path d="M66.0 0L80.9 0L66.2 37L50.3 37z" fill="#ae9a7e"/><path d="M66.0 0L50.3 37" stroke="#7a6347" stroke-width=".7" opacity=".55"/><path d="M80.9 0L95.8 0L82.1 37L66.2 37z" fill="#b29e83"/><path d="M73.0 19.9L88.5 19.9" stroke="#7d6649" stroke-width=".8" opacity=".6"/><path d="M80.9 0L66.2 37" stroke="#7a6347" stroke-width=".7" opacity=".55"/><path d="M95.8 0L110.7 0L98.0 37L82.1 37z" fill="#a08a6c"/><path d="M95.8 0L82.1 37" stroke="#7a6347" stroke-width=".7" opacity=".55"/><path d="M110.7 0L125.6 0L113.9 37L98.0 37z" fill="#a38d70"/><path d="M109.0 4.9L124.1 4.9" stroke="#7d6649" stroke-width=".8" opacity=".6"/><path d="M110.7 0L98.0 37" stroke="#7a6347" stroke-width=".7" opacity=".55"/><path d="M125.6 0L140.5 0L129.7 37L113.9 37z" fill="#a38d70"/><path d="M117.7 25.0L133.2 25.0" stroke="#7d6649" stroke-width=".8" opacity=".6"/><path d="M125.6 0L113.9 37" stroke="#7a6347" stroke-width=".7" opacity=".55"/><path d="M140.5 0L155.4 0L145.6 37L129.7 37z" fill="#b29e83"/><path d="M140.5 0L129.7 37" stroke="#7a6347" stroke-width=".7" opacity=".55"/><path d="M155.4 0L170.3 0L161.5 37L145.6 37z" fill="#ae9a7e"/><path d="M155.4 0L145.6 37" stroke="#7a6347" stroke-width=".7" opacity=".55"/><path d="M170.3 0L185.3 0L177.4 37L161.5 37z" fill="#9a8366"/><path d="M170.3 0L161.5 37" stroke="#7a6347" stroke-width=".7" opacity=".55"/><path d="M185.3 0L200.2 0L193.3 37L177.4 37z" fill="#9a8366"/><path d="M180.1 24.4L195.6 24.4" stroke="#7d6649" stroke-width=".8" opacity=".6"/><path d="M185.3 0L177.4 37" stroke="#7a6347" stroke-width=".7" opacity=".55"/><path d="M200.2 0L215.1 0L209.2 37L193.3 37z" fill="#ab967a"/><path d="M200.2 0L193.3 37" stroke="#7a6347" stroke-width=".7" opacity=".55"/><path d="M215.1 0L230.0 0L225.1 37L209.2 37z" fill="#937c60"/><path d="M215.1 0L209.2 37" stroke="#7a6347" stroke-width=".7" opacity=".55"/><path d="M230.0 0L244.9 0L241.0 37L225.1 37z" fill="#ae9a7e"/><path d="M230.0 0L225.1 37" stroke="#7a6347" stroke-width=".7" opacity=".55"/><path d="M244.9 0L259.8 0L256.8 37L241.0 37z" fill="#b29e83"/><path d="M244.9 0L241.0 37" stroke="#7a6347" stroke-width=".7" opacity=".55"/><path d="M259.8 0L274.7 0L272.7 37L256.8 37z" fill="#9a8366"/><path d="M259.0 10.3L274.1 10.3" stroke="#7d6649" stroke-width=".8" opacity=".6"/><path d="M259.8 0L256.8 37" stroke="#7a6347" stroke-width=".7" opacity=".55"/><path d="M274.7 0L289.6 0L288.6 37L272.7 37z" fill="#ae9a7e"/><path d="M273.2 28.6L288.8 28.6" stroke="#7d6649" stroke-width=".8" opacity=".6"/><path d="M274.7 0L272.7 37" stroke="#7a6347" stroke-width=".7" opacity=".55"/><path d="M289.6 0L304.5 0L304.5 37L288.6 37z" fill="#ab967a"/><path d="M289.6 0L288.6 37" stroke="#7a6347" stroke-width=".7" opacity=".55"/><path d="M304.5 0L319.4 0L320.4 37L304.5 37z" fill="#b29e83"/><path d="M304.5 32.4L320.3 32.4" stroke="#7d6649" stroke-width=".8" opacity=".6"/><path d="M304.5 0L304.5 37" stroke="#7a6347" stroke-width=".7" opacity=".55"/><path d="M319.4 0L334.3 0L336.3 37L320.4 37z" fill="#ab967a"/><path d="M319.9 18.4L335.3 18.4" stroke="#7d6649" stroke-width=".8" opacity=".6"/><path d="M319.4 0L320.4 37" stroke="#7a6347" stroke-width=".7" opacity=".55"/><path d="M334.3 0L349.2 0L352.2 37L336.3 37z" fill="#937c60"/><path d="M334.3 0L336.3 37" stroke="#7a6347" stroke-width=".7" opacity=".55"/><path d="M349.2 0L364.1 0L368.0 37L352.2 37z" fill="#a38d70"/><path d="M349.2 0L352.2 37" stroke="#7a6347" stroke-width=".7" opacity=".55"/><path d="M364.1 0L379.0 0L383.9 37L368.0 37z" fill="#9a8366"/><path d="M364.1 0L368.0 37" stroke="#7a6347" stroke-width=".7" opacity=".55"/><path d="M379.0 0L393.9 0L399.8 37L383.9 37z" fill="#a38d70"/><path d="M380.5 11.1L395.7 11.1" stroke="#7d6649" stroke-width=".8" opacity=".6"/><path d="M379.0 0L383.9 37" stroke="#7a6347" stroke-width=".7" opacity=".55"/><path d="M393.9 0L408.8 0L415.7 37L399.8 37z" fill="#ab967a"/><path d="M393.9 0L399.8 37" stroke="#7a6347" stroke-width=".7" opacity=".55"/><path d="M408.8 0L423.7 0L431.6 37L415.7 37z" fill="#b29e83"/><path d="M408.8 0L415.7 37" stroke="#7a6347" stroke-width=".7" opacity=".55"/><path d="M423.7 0L438.6 0L447.5 37L431.6 37z" fill="#b29e83"/><path d="M423.7 0L431.6 37" stroke="#7a6347" stroke-width=".7" opacity=".55"/><path d="M438.6 0L453.5 0L463.4 37L447.5 37z" fill="#ae9a7e"/><path d="M438.6 0L447.5 37" stroke="#7a6347" stroke-width=".7" opacity=".55"/><path d="M453.5 0L468.4 0L479.3 37L463.4 37z" fill="#a08a6c"/><path d="M454.7 4.5L469.7 4.5" stroke="#7d6649" stroke-width=".8" opacity=".6"/><path d="M453.5 0L463.4 37" stroke="#7a6347" stroke-width=".7" opacity=".55"/><path d="M468.4 0L483.3 0L495.1 37L479.3 37z" fill="#a38d70"/><path d="M474.9 22.0L490.4 22.0" stroke="#7d6649" stroke-width=".8" opacity=".6"/><path d="M468.4 0L479.3 37" stroke="#7a6347" stroke-width=".7" opacity=".55"/><path d="M483.3 0L498.2 0L511.0 37L495.1 37z" fill="#ae9a7e"/><path d="M483.3 0L495.1 37" stroke="#7a6347" stroke-width=".7" opacity=".55"/><path d="M498.2 0L513.1 0L526.9 37L511.0 37z" fill="#a08a6c"/><path d="M506.3 23.4L521.8 23.4" stroke="#7d6649" stroke-width=".8" opacity=".6"/><path d="M498.2 0L511.0 37" stroke="#7a6347" stroke-width=".7" opacity=".55"/><path d="M513.1 0L528.0 0L542.8 37L526.9 37z" fill="#a08a6c"/><path d="M515.5 6.5L530.6 6.5" stroke="#7d6649" stroke-width=".8" opacity=".6"/><path d="M513.1 0L526.9 37" stroke="#7a6347" stroke-width=".7" opacity=".55"/><path d="M528.0 0L542.9 0L558.7 37L542.8 37z" fill="#b29e83"/><path d="M539.0 27.4L554.6 27.4" stroke="#7d6649" stroke-width=".8" opacity=".6"/><path d="M528.0 0L542.8 37" stroke="#7a6347" stroke-width=".7" opacity=".55"/><path d="M542.9 0L557.8 0L574.6 37L558.7 37z" fill="#9a8366"/><path d="M545.7 6.6L560.8 6.6" stroke="#7d6649" stroke-width=".8" opacity=".6"/><path d="M542.9 0L558.7 37" stroke="#7a6347" stroke-width=".7" opacity=".55"/><path d="M557.8 0L572.7 0L590.5 37L574.6 37z" fill="#a38d70"/><path d="M557.8 0L574.6 37" stroke="#7a6347" stroke-width=".7" opacity=".55"/><path d="M572.7 0L587.6 0L606.4 37L590.5 37z" fill="#a38d70"/><path d="M583.6 22.8L599.2 22.8" stroke="#7d6649" stroke-width=".8" opacity=".6"/><path d="M572.7 0L590.5 37" stroke="#7a6347" stroke-width=".7" opacity=".55"/><path d="M587.6 0L602.5 0L622.2 37L606.4 37z" fill="#ae9a7e"/><path d="M587.6 0L606.4 37" stroke="#7a6347" stroke-width=".7" opacity=".55"/><path d="M602.5 0L617.4 0L638.1 37L622.2 37z" fill="#9a8366"/><path d="M602.5 0L622.2 37" stroke="#7a6347" stroke-width=".7" opacity=".55"/><path d="M617.4 0L632.3 0L654.0 37L638.1 37z" fill="#ae9a7e"/><path d="M633.8 29.2L649.4 29.2" stroke="#7d6649" stroke-width=".8" opacity=".6"/><path d="M617.4 0L638.1 37" stroke="#7a6347" stroke-width=".7" opacity=".55"/><path d="M632.3 0L647.2 0L669.9 37L654.0 37z" fill="#9a8366"/><path d="M633.7 2.4L648.7 2.4" stroke="#7d6649" stroke-width=".8" opacity=".6"/><path d="M632.3 0L654.0 37" stroke="#7a6347" stroke-width=".7" opacity=".55"/><rect width="609" height="37" fill="url(#fshade)"/><rect width="609" height="1.5" fill="#6f5a40" opacity=".5"/></svg>
 <div class="pn" style="left:40px;top:33px;width:529px;height:280px;border-radius:3px;box-shadow:0 1px 2px rgba(0,0,0,.06);background:linear-gradient(180deg,#f4f2ef,#f7f5f3 60%,#f3f0ec)"></div>
 <svg class="ic" style="left:43px;top:45px" width="27" height="27" viewBox="0 0 27 27"><path d="M1 15.5l3.2-2.6 4.3 6.3C13 10.5 19 4 26.5 0.5l.3.6C20 6 14.5 13.5 9.8 26L8.4 26z" fill="#0a0a0a"/></svg>
 <svg class="ic" style="left:42px;top:94px" width="10" height="11" viewBox="0 0 10 11"><path d="M.5 6.5l1.3-1 1.6 2.5C5 4.5 7 2 9.7.3l.2.3C7.5 2.7 5.5 6 4 10.5h-.6z" fill="#111"/></svg>
 <svg class="ic" style="left:42px;top:115px" width="10" height="11" viewBox="0 0 10 11"><path d="M.5 6.5l1.3-1 1.6 2.5C5 4.5 7 2 9.7.3l.2.3C7.5 2.7 5.5 6 4 10.5h-.6z" fill="#111"/></svg>
 <svg class="ic" style="left:42px;top:137px" width="10" height="11" viewBox="0 0 10 11"><path d="M.5 6.5l1.3-1 1.6 2.5C5 4.5 7 2 9.7.3l.2.3C7.5 2.7 5.5 6 4 10.5h-.6z" fill="#111"/></svg>
 <div class="ser" style="left:72px;top:38px;font-size:37.8px;font-weight:bold;color:#0a0a0a;line-height:44px;transform:scaleY(1.1);transform-origin:0 0">Preschool</div>
 <div class="ser" style="left:53px;top:91px;font-size:16.8px;line-height:21.4px;color:#222">Preschool Expanding access to preschool education.<br>Strengthening the capacities of preschool teachers.<br>Rehabilitating and maintaining war-damaged preschools in Gaza.</div>
</div>
<div class="a" style="left:410px;top:680px;width:1016px;height:1px;background:#dedde2"></div>
<!-- notes -->
<div class="a" dir="rtl" style="left:900px;top:688px;width:501px;text-align:right;font-size:15.3px;font-weight:bold;color:#484848;line-height:18.8px;white-space:nowrap;transform:scaleX(1.06);transform-origin:100% 0">
أولويات برنامج رياض الاطفال :<br>
<span dir="ltr">1</span>.توسيع فرص الالتحاق بالتعليم ما قبل المدرسي.<br>
<span dir="ltr">2</span>.تعزيز كفاءة معلمي التعليم ما قبل المدرسي.<br>
<span dir="ltr">3</span>.إعادة تأهيل وصيانة رياض الأطفال المتضررة في قطاع غزة.
</div>
<svg class="ic" style="left:1228px;top:356px" width="140" height="115" viewBox="0 0 140 115"><path d="M60 5L132 17V115H110L20 60 0 50z" fill="#e8e7eb" opacity=".25"/><path d="M25 80C50 65 70 50 90 35" stroke="#e4e3e7" stroke-width="1.5" fill="none"/></svg>
<!-- right scroll -->
<svg class="ic" style="left:1413px;top:298px" width="10" height="8" viewBox="0 0 10 8"><path d="M1 7h8L5 2z" fill="#777"/></svg>
<div class="a" style="left:1414px;top:393px;width:8px;height:18px;border-radius:4px;background:#6e6e72"></div>
<svg class="ic" style="left:1413px;top:621px" width="10" height="8" viewBox="0 0 10 8"><path d="M1 1h8L5 6z" fill="#777"/></svg>
<svg class="ic" style="left:1413px;top:633px" width="10" height="28" viewBox="0 0 10 28" fill="#666"><path d="M1 6h8L5 1zM1 11h8L5 6z"/><path d="M1 17h8l-4 5zM1 22h8l-4 5z"/></svg>
<!-- status bar -->
<div class="t" style="left:78px;top:857px;font-size:9.2px;color:#444">Slide 5 of 16</div>
<div class="t" style="left:160px;top:857px;font-size:9.15px;color:#444">Arabic (Saudi Arabia)</div>
<svg class="ic" style="left:262px;top:855px" width="14" height="14" viewBox="0 0 14 14" fill="none" stroke="#555" stroke-width="1"><circle cx="6" cy="2.5" r="1.5"/><path d="M1 5h10M6 5v4l-3 4M6 9l2 2"/><path d="M8 11l1.5 1.5L13 9"/></svg>
<div class="t" style="left:278px;top:857px;font-size:9.35px;color:#444">Accessibility: Good to go</div>

<!-- status right -->
<svg class="ic" style="left:1052px;top:858.5px" width="16" height="9" viewBox="0 0 16 9" fill="none" stroke="#555" stroke-width="1"><path d="M1 2h14M1 5h14M1 8h14"/></svg>
<div class="t" style="left:1069px;top:857.5px;font-size:10px;color:#555">Notes</div>
<div class="a" style="left:1111px;top:853px;width:35px;height:16px;background:#e0dfe4"></div>
<svg class="ic" style="left:1121px;top:856.5px" width="14" height="12" viewBox="0 0 14 12" fill="none" stroke="#555" stroke-width="1"><rect x="1" y="1" width="12" height="10"/><rect x="3" y="3" width="8" height="5"/></svg>
<svg class="ic" style="left:1156px;top:857.5px" width="14" height="11" viewBox="0 0 14 11" fill="none" stroke="#555" stroke-width="1"><rect x="1" y="1" width="5" height="4"/><rect x="8" y="1" width="5" height="4"/><rect x="1" y="7" width="5" height="3.5"/><rect x="8" y="7" width="5" height="3.5"/></svg>
<svg class="ic" style="left:1191px;top:857.5px" width="14" height="11" viewBox="0 0 14 11" fill="none" stroke="#555" stroke-width="1"><rect x="1" y="1" width="12" height="9"/><path d="M7 1v9M3 3.5h2M3 6h2M9 3.5h2M9 6h2"/></svg>
<svg class="ic" style="left:1227px;top:856.5px" width="13" height="13" viewBox="0 0 13 13" fill="none" stroke="#555" stroke-width="1"><rect x="1" y="1" width="11" height="7"/><path d="M6.5 8v4M4 12h5"/></svg>
<div class="a" style="left:1256px;top:863.5px;width:7px;height:1px;background:#555"></div>
<div class="a" style="left:1268px;top:863.5px;width:88px;height:1px;background:#888"></div>
<div class="a" style="left:1311px;top:860.5px;width:1px;height:6px;background:#888"></div>
<div class="a" style="left:1281px;top:858.5px;width:4px;height:11px;background:#555"></div>
<div class="a" style="left:1360px;top:863.5px;width:8px;height:1px;background:#555"></div>
<div class="a" style="left:1363.5px;top:860px;width:1px;height:8px;background:#555"></div>
<div class="t" style="left:1378px;top:858.5px;font-size:10px;color:#444">36%</div>
<svg class="ic" style="left:1408px;top:855.5px" width="14" height="14" viewBox="0 0 14 14" fill="none" stroke="#444" stroke-width="1"><rect x="4.5" y="3" width="5" height="7"/><path d="M2.5 4.5L1 6.5l1.5 2M11.5 4.5L13 6.5l-1.5 2M6 1.5l1-1 1 1M6 11.5l1 1 1-1"/></svg>
</div>
<svg class="ic" style="left:257px;top:286px" width="12" height="18" viewBox="0 0 12 18"><path d="M1 1v13.5l3.2-3 2.3 5.2 2-.9-2.2-5H10z" fill="#fff" stroke="#111" stroke-width="1"/></svg>
<!-- banner -->
<div class="a" style="left:516px;top:136px;width:337px;height:24px;background:#23d05a"></div>
<div class="a" style="left:853px;top:136px;width:125px;height:24px;background:#222;border-radius:0 0 6px 0"></div>
<div class="t" style="left:540px;top:141px;font-size:12.8px;font-weight:bold;color:#073a14">You are viewing</div>
<div class="t" style="left:644px;top:141px;font-size:12.45px;font-weight:bold;color:#073a14">Nasif Amira's screen</div>
<svg class="ic" style="left:771px;top:140px" width="15" height="16" viewBox="0 0 15 16" fill="none" stroke="#073a14" stroke-width="1.3"><rect x="5" y="1.5" width="5" height="8.5" rx="2.5" fill="#073a14"/><path d="M3 7.5a4.5 4.5 0 0 0 9 0M7.5 12v3M1 15L14 1"/></svg>
<div class="a" style="left:795px;top:145px;width:6px;height:6px;border-radius:50%;background:#e5614a"></div>
<div class="t" style="left:808px;top:143px;font-size:9.5px;font-weight:bold;color:#073a14">REC</div>
<div class="t" style="left:866px;top:141px;font-size:12.86px;font-weight:bold;color:#fff">View Options</div>
<svg class="ic" style="left:952px;top:144px" width="12" height="8" viewBox="0 0 12 8" fill="none" stroke="#fff" stroke-width="1.8"><path d="M1 1.5l5 5 5-5"/></svg>
<!-- toast -->
<div class="a" style="left:803px;top:800px;width:425px;height:60px;background:#1f1f21;border-radius:6px"></div>
<svg class="ic" style="left:1005px;top:859px" width="24" height="11" viewBox="0 0 24 11"><path d="M0 0h24L12 11z" fill="#1f1f21"/></svg>
<div class="t" style="left:803px;width:425px;text-align:center;top:823px;font-size:13.9px;color:#fff">Language interpretation available. Click here to get started.</div>
<!-- watermark -->
<div class="t" style="left:1386px;top:835.5px;font-size:18.5px;color:rgba(160,160,160,.8)">Activate Windows</div>
<div class="t" style="left:1386px;top:861px;font-size:14px;color:rgba(160,160,160,.7)">Go to Settings to activate Windows.</div>
<!-- zoom toolbar -->
<svg class="ic" style="left:571px;top:880px" width="22" height="20" viewBox="0 0 22 20" fill="none" stroke="#fff" stroke-width="1.5"><circle cx="6.5" cy="3.5" r="2.3"/><path d="M7 10.5H5.5a3.5 3.5 0 0 0 0 7H7"/><circle cx="13" cy="7" r="2.3"/><rect x="8" y="12" width="10.5" height="6" rx="3"/></svg>
<div class="t" style="left:593.5px;top:879.5px;font-size:10.5px;font-weight:bold;color:#cfcfcf">70</div>
<svg class="ic" style="left:651px;top:879px" width="24" height="24" viewBox="0 0 24 24" fill="none" stroke="#fff" stroke-width="1.5"><path d="M2.5 13.5a6.5 6 0 0 1 6.5-6h3a6.5 6 0 0 1 6.5 6 6.5 6 0 0 1-6.5 6h-1.5l-2.5 2.5v-2.7a6.5 6 0 0 1-5.5-5.8z"/><path d="M6.5 5.5a5 3.5 0 0 1 6.5-1.5" /><path d="M19.5 17.5l-1 2"/><circle cx="7" cy="13.5" r=".9" fill="#fff" stroke="none"/><circle cx="10.5" cy="13.5" r=".9" fill="#fff" stroke="none"/><circle cx="14" cy="13.5" r=".9" fill="#fff" stroke="none"/></svg>
<div class="a" style="left:667px;top:875px;width:19px;height:12px;border-radius:4px;background:#e0393e;color:#fff;font-size:10px;font-weight:bold;line-height:12px;text-align:center">14</div>
<svg class="ic" style="left:689px;top:882px" width="8" height="5" viewBox="0 0 8 5" fill="none" stroke="#888" stroke-width="1.2"><path d="M1 4.5l3-3 3 3"/></svg>
<svg class="ic" style="left:732px;top:879px;transform:rotate(-14deg)" width="24" height="21" viewBox="0 0 24 21" fill="none" stroke="#fff" stroke-width="1.6"><path d="M12 19.5C6 16 1.5 12 1.5 7A5.5 5.5 0 0 1 12 4.5 5.5 5.5 0 0 1 22.5 7c0 5-4.5 9-10.5 12.5z"/></svg>
<div class="a" style="left:818px;top:879px;width:24px;height:19.5px;border-radius:3px;background:#22e28a"></div>
<svg class="ic" style="left:822px;top:881px" width="16" height="16" viewBox="0 0 16 16"><path d="M8 3L3.5 8h3V13.5h3V8h3z" fill="#0a0a0a"/></svg>
<svg class="ic" style="left:912px;top:876px" width="28" height="27" viewBox="0 0 28 27"><defs><linearGradient id="sg" x1="0" y1="0" x2="1" y2="1"><stop offset="0" stop-color="#f4faff"/><stop offset=".6" stop-color="#b9dcf7"/><stop offset="1" stop-color="#7fb6ea"/></linearGradient></defs><path d="M13.5 2c.9 7 3 9.6 10.5 11.5C16.5 15.4 14.4 18 13.5 25 12.6 18 10.5 15.4 3 13.5 10.5 11.6 12.6 9 13.5 2z" fill="url(#sg)"/><path d="M23 1c.4 2 1.1 2.8 3 3.2-1.9.4-2.6 1.2-3 3.2-.4-2-1.1-2.8-3-3.2 1.9-.4 2.6-1.2 3-3.2z" fill="#d6ecff"/></svg>
<svg class="ic" style="left:1002px;top:876px" width="26" height="26" viewBox="0 0 26 26" fill="none" stroke="#fff" stroke-width="1.6"><circle cx="13" cy="13" r="11.5"/><circle cx="8" cy="13" r="1.3" fill="#fff" stroke="none"/><circle cx="13" cy="13" r="1.3" fill="#fff" stroke="none"/><circle cx="18" cy="13" r="1.3" fill="#fff" stroke="none"/></svg>



<!-- banner -->

</body></html>
